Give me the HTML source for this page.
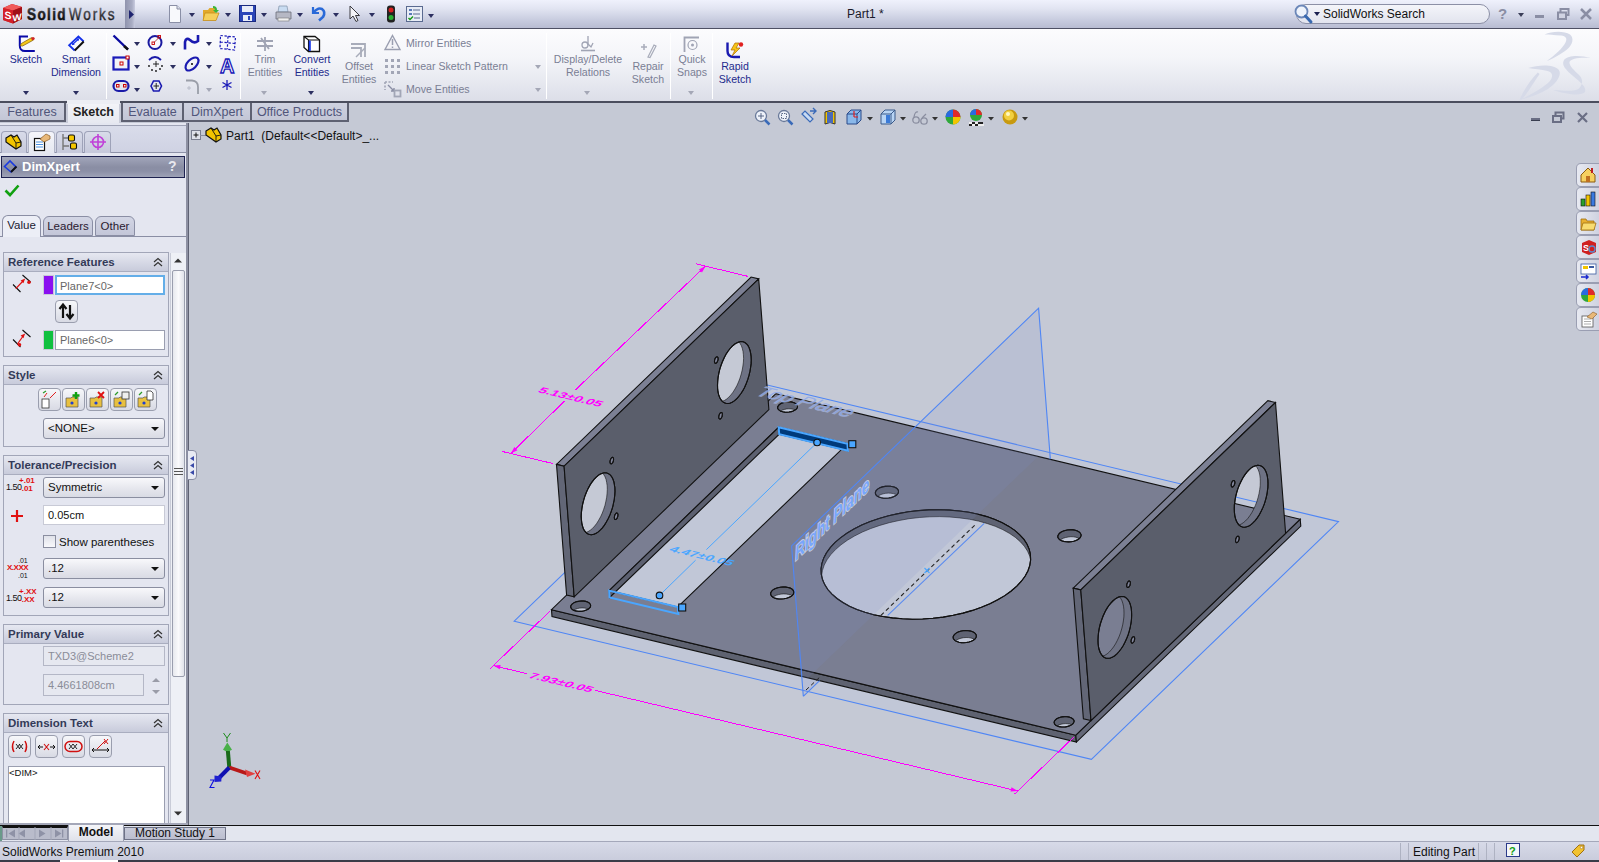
<!DOCTYPE html>
<html><head><meta charset="utf-8">
<style>
*{margin:0;padding:0;box-sizing:border-box}
html,body{width:1599px;height:862px;overflow:hidden;background:#c5c9d5;font-family:"Liberation Sans",sans-serif;font-size:11px;color:#000}
.a{position:absolute}
svg{overflow:visible}
#title{left:0;top:0;width:1599px;height:29px;background:linear-gradient(#eff1fc 0%,#e2e5f2 30%,#c9cde0 70%,#b8bcd2 100%);border-bottom:1px solid #4e5064}
#logo{left:0;top:0;width:125px;height:28px;background:linear-gradient(#e8ebf6 0%,#d4d7e6 50%,#bfc3d6 100%)}
#logoarr{left:125px;top:0;width:10px;height:28px;background:linear-gradient(90deg,#8f93ad,#a9adc4 70%,#c9cce0)}
#ribbon{left:0;top:29px;width:1599px;height:74px;background:linear-gradient(#fcfcfe 0%,#f4f5f9 40%,#e4e6ee 80%,#dcdee8 100%);border-bottom:2px solid #4b4e5e}
.rt{position:absolute;color:#1d2a8c;text-align:center;line-height:13px;font-size:10.6px;white-space:nowrap}
.gr{color:#7a7e94}
.sep{position:absolute;top:33px;width:1px;height:66px;background:#d0d2dc;border-right:1px solid #fff}
.dd{position:absolute;width:0;height:0;border-left:3.5px solid transparent;border-right:3.5px solid transparent;border-top:4px solid #2c2f60}
.ddg{border-top-color:#a4a7b6}
.tab{position:absolute;top:103px;height:19px;background:linear-gradient(#cfd2e0,#c3c6d6);border:2px solid #5e6172;border-top:none;color:#50557a;font-size:12.5px;line-height:18px;text-align:center}
.tabact{background:linear-gradient(#f3f4f8,#e6e8f0);border-color:#c8cbd8;border-bottom:none;height:21px;font-weight:bold;color:#222}
</style></head><body>
<!-- viewport bg -->
<div class="a" style="left:0;top:102px;width:1599px;height:724px;background:#c5c9d5"></div>
<svg class="a" style="left:0;top:0" width="1599" height="862" viewBox="0 0 1599 862"><polygon points="514.2,621.2 1091.4,759.4 1338.5,521.6 761.2,383.5" fill="#b4c0e4" fill-opacity="0.18" stroke="#4f86f5" stroke-width="1.1"/>
<polygon points="551.5,609.7 1075.8,735.2 1076.4,742.1 552.0,616.6" fill="#5e6270" stroke="#111" stroke-width="1.1"/>
<polygon points="1075.8,735.2 1300.2,519.2 1300.8,526.1 1076.4,742.1" fill="#646878" stroke="#111" stroke-width="1.1"/>
<path d="M551.5,609.7 L1075.8,735.2 L1300.2,519.2 L775.9,393.7ZM589.3,608.2 L590.2,607.1 L590.6,606.0 L590.5,604.8 L589.9,603.8 L588.9,602.8 L587.4,602.0 L585.6,601.4 L583.6,601.1 L581.4,601.0 L579.2,601.2 L577.1,601.6 L575.1,602.3 L573.4,603.1 L572.1,604.1 L571.2,605.2 L570.8,606.4 L570.9,607.5 L571.5,608.6 L572.5,609.6 L574.0,610.4 L575.8,610.9 L577.8,611.3 L580.0,611.4 L582.2,611.2 L584.3,610.8 L586.3,610.1 L588.0,609.2ZM1072.7,723.9 L1073.5,722.8 L1074.0,721.7 L1073.9,720.5 L1073.3,719.4 L1072.2,718.5 L1070.8,717.7 L1069.0,717.1 L1067.0,716.8 L1064.8,716.7 L1062.6,716.9 L1060.4,717.3 L1058.5,717.9 L1056.8,718.8 L1055.5,719.8 L1054.6,720.9 L1054.2,722.1 L1054.3,723.2 L1054.9,724.3 L1055.9,725.2 L1057.3,726.0 L1059.1,726.6 L1061.2,726.9 L1063.4,727.0 L1065.6,726.9 L1067.7,726.4 L1069.7,725.8 L1071.4,724.9ZM796.2,409.1 L797.1,408.0 L797.5,406.8 L797.4,405.7 L796.8,404.6 L795.8,403.6 L794.4,402.9 L792.6,402.3 L790.5,401.9 L788.3,401.9 L786.1,402.0 L784.0,402.5 L782.0,403.1 L780.3,404.0 L779.0,405.0 L778.2,406.1 L777.7,407.2 L777.8,408.4 L778.4,409.5 L779.5,410.4 L780.9,411.2 L782.7,411.8 L784.7,412.1 L786.9,412.2 L789.1,412.0 L791.3,411.6 L793.2,410.9 L794.9,410.1ZM1279.6,524.8 L1280.5,523.7 L1280.9,522.5 L1280.8,521.4 L1280.2,520.3 L1279.2,519.3 L1277.7,518.5 L1275.9,518.0 L1273.9,517.6 L1271.7,517.5 L1269.5,517.7 L1267.3,518.1 L1265.4,518.8 L1263.7,519.6 L1262.4,520.6 L1261.5,521.8 L1261.1,522.9 L1261.2,524.1 L1261.8,525.1 L1262.8,526.1 L1264.3,526.9 L1266.1,527.5 L1268.1,527.8 L1270.3,527.9 L1272.5,527.7 L1274.6,527.3 L1276.6,526.6 L1278.3,525.8ZM792.3,595.4 L793.3,594.1 L793.8,592.8 L793.7,591.4 L793.0,590.2 L791.8,589.0 L790.1,588.1 L788.0,587.5 L785.6,587.1 L783.1,587.0 L780.5,587.2 L778.0,587.7 L775.7,588.4 L773.7,589.4 L772.2,590.6 L771.2,591.9 L770.7,593.2 L770.8,594.6 L771.5,595.8 L772.7,597.0 L774.4,597.9 L776.5,598.6 L778.8,599.0 L781.4,599.0 L784.0,598.8 L786.5,598.3 L788.8,597.6 L790.8,596.6ZM974.8,639.1 L975.8,637.8 L976.3,636.4 L976.2,635.1 L975.5,633.8 L974.3,632.7 L972.6,631.8 L970.5,631.1 L968.1,630.7 L965.6,630.6 L963.0,630.8 L960.5,631.3 L958.2,632.1 L956.2,633.1 L954.7,634.3 L953.7,635.6 L953.2,636.9 L953.3,638.3 L954.0,639.5 L955.2,640.6 L956.9,641.6 L959.0,642.2 L961.3,642.6 L963.9,642.7 L966.5,642.5 L969.0,642.0 L971.3,641.3 L973.3,640.3ZM897.0,494.6 L898.0,493.3 L898.5,492.0 L898.4,490.6 L897.7,489.4 L896.5,488.3 L894.8,487.3 L892.7,486.7 L890.3,486.3 L887.8,486.2 L885.2,486.4 L882.7,486.9 L880.4,487.6 L878.4,488.6 L876.9,489.8 L875.9,491.1 L875.4,492.5 L875.5,493.8 L876.2,495.1 L877.4,496.2 L879.1,497.1 L881.2,497.8 L883.6,498.2 L886.1,498.3 L888.7,498.0 L891.2,497.6 L893.5,496.8 L895.5,495.8ZM1079.5,538.3 L1080.5,537.0 L1081.0,535.6 L1080.9,534.3 L1080.2,533.0 L1079.0,531.9 L1077.3,531.0 L1075.2,530.3 L1072.9,529.9 L1070.3,529.8 L1067.7,530.0 L1065.2,530.5 L1062.9,531.3 L1060.9,532.3 L1059.4,533.5 L1058.4,534.8 L1057.9,536.1 L1058.0,537.5 L1058.7,538.7 L1059.9,539.8 L1061.6,540.8 L1063.7,541.4 L1066.1,541.8 L1068.6,541.9 L1071.2,541.7 L1073.7,541.2 L1076.0,540.5 L1078.0,539.5ZM1016.8,586.2 L1021.4,581.2 L1025.2,576.0 L1028.0,570.7 L1029.8,565.3 L1030.6,560.0 L1030.4,554.6 L1029.2,549.4 L1027.0,544.3 L1023.9,539.4 L1019.7,534.8 L1014.7,530.4 L1008.8,526.4 L1002.2,522.7 L994.8,519.4 L986.7,516.6 L978.0,514.2 L968.9,512.3 L959.3,511.0 L949.4,510.1 L939.3,509.7 L929.0,509.9 L918.7,510.6 L908.5,511.8 L898.5,513.6 L888.7,515.8 L879.2,518.5 L870.3,521.6 L861.8,525.1 L854.0,529.0 L846.9,533.3 L840.5,537.9 L834.9,542.7 L830.3,547.7 L826.5,552.9 L823.7,558.2 L821.9,563.6 L821.1,568.9 L821.3,574.3 L822.5,579.5 L824.7,584.6 L827.8,589.5 L832.0,594.1 L837.0,598.5 L842.9,602.5 L849.5,606.2 L856.9,609.4 L865.0,612.3 L873.7,614.7 L882.8,616.5 L892.4,617.9 L902.3,618.8 L912.4,619.2 L922.7,619.0 L933.0,618.3 L943.2,617.1 L953.2,615.3 L963.0,613.1 L972.5,610.4 L981.4,607.3 L989.9,603.8 L997.7,599.8 L1004.8,595.6 L1011.2,591.0ZM609.1,590.6 L778.7,427.3 L847.4,443.8 L677.8,607.0Z" fill="#7a7e92" fill-rule="evenodd" stroke="#111" stroke-width="1.1"/>
<path d="M590.2,607.1 L590.6,606.0 L590.5,604.8 L589.9,603.8 L588.9,602.8 L587.4,602.0 L585.6,601.4 L583.6,601.1 L581.4,601.0 L579.2,601.2 L577.1,601.6 L575.1,602.3 L573.4,603.1 L572.1,604.1 L571.2,605.2 L570.8,606.4 L570.9,607.5 L571.5,608.6 L572.5,609.6 L573.7,610.2 L574.0,610.0 L575.6,609.2 L577.6,608.5 L579.7,608.1 L582.0,607.9 L584.1,608.0 L586.2,608.3 L588.0,608.9 L588.2,609.1 L589.3,608.2Z" fill="#5f6373" stroke="#111" stroke-width="0.6"/>
<path d="M589.3,608.2 L590.2,607.1 L590.6,606.0 L590.5,604.8 L589.9,603.8 L588.9,602.8 L587.4,602.0 L585.6,601.4 L583.6,601.1 L581.4,601.0 L579.2,601.2 L577.1,601.6 L575.1,602.3 L573.4,603.1 L572.1,604.1 L571.2,605.2 L570.8,606.4 L570.9,607.5 L571.5,608.6 L572.5,609.6 L574.0,610.4 L575.8,610.9 L577.8,611.3 L580.0,611.4 L582.2,611.2 L584.3,610.8 L586.3,610.1 L588.0,609.2Z" fill="none" stroke="#111" stroke-width="1.1"/>
<path d="M1073.5,722.8 L1074.0,721.7 L1073.9,720.5 L1073.3,719.4 L1072.2,718.5 L1070.8,717.7 L1069.0,717.1 L1067.0,716.8 L1064.8,716.7 L1062.6,716.9 L1060.4,717.3 L1058.5,717.9 L1056.8,718.8 L1055.5,719.8 L1054.6,720.9 L1054.2,722.1 L1054.3,723.2 L1054.9,724.3 L1055.9,725.2 L1057.1,725.9 L1057.3,725.7 L1059.0,724.9 L1061.0,724.2 L1063.1,723.8 L1065.3,723.6 L1067.5,723.7 L1069.5,724.0 L1071.3,724.6 L1071.6,724.7 L1072.7,723.9Z" fill="#5f6373" stroke="#111" stroke-width="0.6"/>
<path d="M1072.7,723.9 L1073.5,722.8 L1074.0,721.7 L1073.9,720.5 L1073.3,719.4 L1072.2,718.5 L1070.8,717.7 L1069.0,717.1 L1067.0,716.8 L1064.8,716.7 L1062.6,716.9 L1060.4,717.3 L1058.5,717.9 L1056.8,718.8 L1055.5,719.8 L1054.6,720.9 L1054.2,722.1 L1054.3,723.2 L1054.9,724.3 L1055.9,725.2 L1057.3,726.0 L1059.1,726.6 L1061.2,726.9 L1063.4,727.0 L1065.6,726.9 L1067.7,726.4 L1069.7,725.8 L1071.4,724.9Z" fill="none" stroke="#111" stroke-width="1.1"/>
<path d="M797.1,408.0 L797.5,406.8 L797.4,405.7 L796.8,404.6 L795.8,403.6 L794.4,402.9 L792.6,402.3 L790.5,401.9 L788.3,401.9 L786.1,402.0 L784.0,402.5 L782.0,403.1 L780.3,404.0 L779.0,405.0 L778.2,406.1 L777.7,407.2 L777.8,408.4 L778.4,409.5 L779.5,410.4 L780.6,411.1 L780.9,410.9 L782.6,410.0 L784.5,409.4 L786.7,408.9 L788.9,408.8 L791.1,408.9 L793.1,409.2 L794.9,409.8 L795.2,409.9 L796.2,409.1Z" fill="#5f6373" stroke="#111" stroke-width="0.6"/>
<path d="M796.2,409.1 L797.1,408.0 L797.5,406.8 L797.4,405.7 L796.8,404.6 L795.8,403.6 L794.4,402.9 L792.6,402.3 L790.5,401.9 L788.3,401.9 L786.1,402.0 L784.0,402.5 L782.0,403.1 L780.3,404.0 L779.0,405.0 L778.2,406.1 L777.7,407.2 L777.8,408.4 L778.4,409.5 L779.5,410.4 L780.9,411.2 L782.7,411.8 L784.7,412.1 L786.9,412.2 L789.1,412.0 L791.3,411.6 L793.2,410.9 L794.9,410.1Z" fill="none" stroke="#111" stroke-width="1.1"/>
<path d="M1280.5,523.7 L1280.9,522.5 L1280.8,521.4 L1280.2,520.3 L1279.2,519.3 L1277.7,518.5 L1275.9,518.0 L1273.9,517.6 L1271.7,517.5 L1269.5,517.7 L1267.3,518.1 L1265.4,518.8 L1263.7,519.6 L1262.4,520.6 L1261.5,521.8 L1261.1,522.9 L1261.2,524.1 L1261.8,525.1 L1262.8,526.1 L1264.0,526.7 L1264.2,526.6 L1265.9,525.7 L1267.9,525.0 L1270.0,524.6 L1272.2,524.4 L1274.4,524.5 L1276.5,524.9 L1278.3,525.4 L1278.5,525.6 L1279.6,524.8Z" fill="#5f6373" stroke="#111" stroke-width="0.6"/>
<path d="M1279.6,524.8 L1280.5,523.7 L1280.9,522.5 L1280.8,521.4 L1280.2,520.3 L1279.2,519.3 L1277.7,518.5 L1275.9,518.0 L1273.9,517.6 L1271.7,517.5 L1269.5,517.7 L1267.3,518.1 L1265.4,518.8 L1263.7,519.6 L1262.4,520.6 L1261.5,521.8 L1261.1,522.9 L1261.2,524.1 L1261.8,525.1 L1262.8,526.1 L1264.3,526.9 L1266.1,527.5 L1268.1,527.8 L1270.3,527.9 L1272.5,527.7 L1274.6,527.3 L1276.6,526.6 L1278.3,525.8Z" fill="none" stroke="#111" stroke-width="1.1"/>
<path d="M793.3,594.1 L793.8,592.8 L793.7,591.4 L793.0,590.2 L791.8,589.0 L790.1,588.1 L788.0,587.5 L785.6,587.1 L783.1,587.0 L780.5,587.2 L778.0,587.7 L775.7,588.4 L773.7,589.4 L772.2,590.6 L771.2,591.9 L770.7,593.2 L770.8,594.6 L771.5,595.8 L772.7,597.0 L773.1,597.2 L774.3,596.3 L776.2,595.3 L778.5,594.6 L781.0,594.1 L783.6,593.9 L786.2,594.0 L788.5,594.4 L790.6,595.0 L791.9,595.7 L792.3,595.4Z" fill="#5f6373" stroke="#111" stroke-width="0.6"/>
<path d="M792.3,595.4 L793.3,594.1 L793.8,592.8 L793.7,591.4 L793.0,590.2 L791.8,589.0 L790.1,588.1 L788.0,587.5 L785.6,587.1 L783.1,587.0 L780.5,587.2 L778.0,587.7 L775.7,588.4 L773.7,589.4 L772.2,590.6 L771.2,591.9 L770.7,593.2 L770.8,594.6 L771.5,595.8 L772.7,597.0 L774.4,597.9 L776.5,598.6 L778.8,599.0 L781.4,599.0 L784.0,598.8 L786.5,598.3 L788.8,597.6 L790.8,596.6Z" fill="none" stroke="#111" stroke-width="1.1"/>
<path d="M975.8,637.8 L976.3,636.4 L976.2,635.1 L975.5,633.8 L974.3,632.7 L972.6,631.8 L970.5,631.1 L968.1,630.7 L965.6,630.6 L963.0,630.8 L960.5,631.3 L958.2,632.1 L956.2,633.1 L954.7,634.3 L953.7,635.6 L953.2,636.9 L953.3,638.3 L954.0,639.5 L955.2,640.6 L955.6,640.9 L956.8,640.0 L958.7,639.0 L961.0,638.2 L963.5,637.7 L966.1,637.5 L968.7,637.6 L971.0,638.0 L973.1,638.7 L974.4,639.4 L974.8,639.1Z" fill="#5f6373" stroke="#111" stroke-width="0.6"/>
<path d="M974.8,639.1 L975.8,637.8 L976.3,636.4 L976.2,635.1 L975.5,633.8 L974.3,632.7 L972.6,631.8 L970.5,631.1 L968.1,630.7 L965.6,630.6 L963.0,630.8 L960.5,631.3 L958.2,632.1 L956.2,633.1 L954.7,634.3 L953.7,635.6 L953.2,636.9 L953.3,638.3 L954.0,639.5 L955.2,640.6 L956.9,641.6 L959.0,642.2 L961.3,642.6 L963.9,642.7 L966.5,642.5 L969.0,642.0 L971.3,641.3 L973.3,640.3Z" fill="none" stroke="#111" stroke-width="1.1"/>
<path d="M898.0,493.3 L898.5,492.0 L898.4,490.6 L897.7,489.4 L896.5,488.3 L894.8,487.3 L892.7,486.7 L890.3,486.3 L887.8,486.2 L885.2,486.4 L882.7,486.9 L880.4,487.6 L878.4,488.6 L876.9,489.8 L875.9,491.1 L875.4,492.5 L875.5,493.8 L876.2,495.1 L877.4,496.2 L877.8,496.4 L879.0,495.5 L880.9,494.5 L883.2,493.8 L885.7,493.3 L888.3,493.1 L890.9,493.2 L893.3,493.6 L895.4,494.2 L896.6,494.9 L897.0,494.6Z" fill="#5f6373" stroke="#111" stroke-width="0.6"/>
<path d="M897.0,494.6 L898.0,493.3 L898.5,492.0 L898.4,490.6 L897.7,489.4 L896.5,488.3 L894.8,487.3 L892.7,486.7 L890.3,486.3 L887.8,486.2 L885.2,486.4 L882.7,486.9 L880.4,487.6 L878.4,488.6 L876.9,489.8 L875.9,491.1 L875.4,492.5 L875.5,493.8 L876.2,495.1 L877.4,496.2 L879.1,497.1 L881.2,497.8 L883.6,498.2 L886.1,498.3 L888.7,498.0 L891.2,497.6 L893.5,496.8 L895.5,495.8Z" fill="none" stroke="#111" stroke-width="1.1"/>
<path d="M1080.5,537.0 L1081.0,535.6 L1080.9,534.3 L1080.2,533.0 L1079.0,531.9 L1077.3,531.0 L1075.2,530.3 L1072.9,529.9 L1070.3,529.8 L1067.7,530.0 L1065.2,530.5 L1062.9,531.3 L1060.9,532.3 L1059.4,533.5 L1058.4,534.8 L1057.9,536.1 L1058.0,537.5 L1058.7,538.7 L1059.9,539.8 L1060.4,540.1 L1061.5,539.2 L1063.4,538.2 L1065.7,537.5 L1068.2,537.0 L1070.8,536.7 L1073.4,536.8 L1075.8,537.2 L1077.9,537.9 L1079.1,538.6 L1079.5,538.3Z" fill="#5f6373" stroke="#111" stroke-width="0.6"/>
<path d="M1079.5,538.3 L1080.5,537.0 L1081.0,535.6 L1080.9,534.3 L1080.2,533.0 L1079.0,531.9 L1077.3,531.0 L1075.2,530.3 L1072.9,529.9 L1070.3,529.8 L1067.7,530.0 L1065.2,530.5 L1062.9,531.3 L1060.9,532.3 L1059.4,533.5 L1058.4,534.8 L1057.9,536.1 L1058.0,537.5 L1058.7,538.7 L1059.9,539.8 L1061.6,540.8 L1063.7,541.4 L1066.1,541.8 L1068.6,541.9 L1071.2,541.7 L1073.7,541.2 L1076.0,540.5 L1078.0,539.5Z" fill="none" stroke="#111" stroke-width="1.1"/>
<path d="M1030.6,560.0 L1030.4,554.6 L1029.2,549.4 L1027.0,544.3 L1023.9,539.4 L1019.7,534.8 L1014.7,530.4 L1008.8,526.4 L1002.2,522.7 L994.8,519.4 L986.7,516.6 L978.0,514.2 L968.9,512.3 L959.3,511.0 L949.4,510.1 L939.3,509.7 L929.0,509.9 L918.7,510.6 L908.5,511.8 L898.5,513.6 L888.7,515.8 L879.2,518.5 L870.3,521.6 L861.8,525.1 L854.0,529.0 L846.9,533.3 L840.5,537.9 L834.9,542.7 L830.3,547.7 L826.5,552.9 L823.7,558.2 L821.9,563.6 L821.1,568.9 L821.3,574.3 L821.6,575.8 L822.4,570.5 L824.2,565.1 L827.0,559.8 L830.8,554.6 L835.5,549.6 L841.0,544.8 L847.4,540.2 L854.5,536.0 L862.4,532.0 L870.8,528.5 L879.8,525.4 L889.2,522.7 L899.0,520.5 L909.0,518.7 L919.3,517.5 L929.5,516.8 L939.8,516.6 L949.9,517.0 L959.8,517.9 L969.4,519.2 L978.6,521.1 L987.2,523.5 L995.3,526.3 L1002.7,529.6 L1009.4,533.3 L1015.3,537.3 L1020.3,541.7 L1024.4,546.3 L1027.6,551.2 L1029.8,556.3 L1030.6,560.0Z" fill="#5f6373" stroke="#111" stroke-width="0.6"/>
<path d="M1016.8,586.2 L1021.4,581.2 L1025.2,576.0 L1028.0,570.7 L1029.8,565.3 L1030.6,560.0 L1030.4,554.6 L1029.2,549.4 L1027.0,544.3 L1023.9,539.4 L1019.7,534.8 L1014.7,530.4 L1008.8,526.4 L1002.2,522.7 L994.8,519.4 L986.7,516.6 L978.0,514.2 L968.9,512.3 L959.3,511.0 L949.4,510.1 L939.3,509.7 L929.0,509.9 L918.7,510.6 L908.5,511.8 L898.5,513.6 L888.7,515.8 L879.2,518.5 L870.3,521.6 L861.8,525.1 L854.0,529.0 L846.9,533.3 L840.5,537.9 L834.9,542.7 L830.3,547.7 L826.5,552.9 L823.7,558.2 L821.9,563.6 L821.1,568.9 L821.3,574.3 L822.5,579.5 L824.7,584.6 L827.8,589.5 L832.0,594.1 L837.0,598.5 L842.9,602.5 L849.5,606.2 L856.9,609.4 L865.0,612.3 L873.7,614.7 L882.8,616.5 L892.4,617.9 L902.3,618.8 L912.4,619.2 L922.7,619.0 L933.0,618.3 L943.2,617.1 L953.2,615.3 L963.0,613.1 L972.5,610.4 L981.4,607.3 L989.9,603.8 L997.7,599.8 L1004.8,595.6 L1011.2,591.0Z" fill="none" stroke="#111" stroke-width="1.1"/>
<polygon points="609.1,590.6 778.7,427.3 779.2,434.2 609.6,597.5" fill="#5c6070" stroke="#111" stroke-width="1.1"/>
<polygon points="778.7,427.3 847.4,443.8 847.9,450.7 779.2,434.2" fill="#5c6070" stroke="#111" stroke-width="1.1"/>
<polygon points="556.5,464.4 564.1,466.2 758.7,278.9 751.1,277.0" fill="#7c8094" stroke="#111" stroke-width="1.1"/>
<polygon points="556.5,464.4 564.1,466.2 574.2,596.9 566.6,595.1" fill="#626676" stroke="#111" stroke-width="1.1"/>
<path d="M574.2,596.9 L564.1,466.2 L758.7,278.9 L768.9,409.6ZM596.0,477.3 L598.2,475.4 L600.4,474.0 L602.6,473.2 L604.6,472.8 L606.6,473.0 L608.4,473.7 L610.1,474.9 L611.5,476.6 L612.7,478.8 L613.7,481.4 L614.3,484.4 L614.8,487.7 L614.9,491.3 L614.7,495.1 L614.3,499.0 L613.5,503.0 L612.6,507.1 L611.3,511.1 L609.9,514.9 L608.2,518.6 L606.3,522.0 L604.4,525.1 L602.3,527.9 L600.1,530.2 L597.9,532.1 L595.7,533.4 L593.6,534.3 L591.5,534.7 L589.5,534.5 L587.7,533.8 L586.1,532.6 L584.6,530.9 L583.4,528.7 L582.5,526.1 L581.8,523.1 L581.4,519.8 L581.2,516.2 L581.4,512.4 L581.9,508.5 L582.6,504.4 L583.6,500.4 L584.8,496.4 L586.3,492.5 L587.9,488.9 L589.8,485.4 L591.8,482.3 L593.8,479.6ZM732.3,346.1 L734.5,344.3 L736.7,342.9 L738.8,342.0 L740.9,341.6 L742.9,341.8 L744.7,342.5 L746.3,343.7 L747.8,345.4 L749.0,347.6 L749.9,350.2 L750.6,353.2 L751.0,356.5 L751.2,360.1 L751.0,363.9 L750.5,367.9 L749.8,371.9 L748.8,375.9 L747.6,379.9 L746.1,383.8 L744.5,387.5 L742.6,390.9 L740.6,394.0 L738.5,396.7 L736.4,399.0 L734.2,400.9 L732.0,402.3 L729.8,403.2 L727.8,403.5 L725.8,403.3 L724.0,402.6 L722.3,401.4 L720.9,399.7 L719.7,397.5 L718.7,394.9 L718.0,392.0 L717.6,388.6 L717.5,385.1 L717.7,381.3 L718.1,377.3 L718.8,373.3 L719.8,369.2 L721.1,365.2 L722.5,361.4 L724.2,357.7 L726.0,354.3 L728.0,351.2 L730.1,348.5ZM611.6,457.8 L612.1,457.5 L612.7,457.4 L613.1,457.6 L613.4,458.1 L613.5,458.9 L613.5,459.9 L613.3,460.9 L613.0,461.9 L612.5,462.7 L612.0,463.4 L611.5,463.8 L610.9,463.8 L610.5,463.6 L610.2,463.1 L610.1,462.3 L610.1,461.3 L610.3,460.3 L610.6,459.4 L611.1,458.5ZM615.9,513.5 L616.5,513.1 L617.0,513.0 L617.4,513.3 L617.7,513.8 L617.9,514.6 L617.8,515.5 L617.7,516.5 L617.3,517.5 L616.9,518.4 L616.3,519.0 L615.8,519.4 L615.3,519.5 L614.8,519.3 L614.5,518.7 L614.4,517.9 L614.4,517.0 L614.6,516.0 L614.9,515.0 L615.4,514.2ZM716.1,357.3 L716.6,356.9 L717.1,356.8 L717.6,357.1 L717.9,357.6 L718.0,358.4 L718.0,359.3 L717.8,360.3 L717.5,361.3 L717.0,362.2 L716.5,362.8 L715.9,363.2 L715.4,363.3 L715.0,363.0 L714.7,362.5 L714.5,361.7 L714.5,360.8 L714.7,359.8 L715.1,358.8 L715.5,357.9ZM720.4,413.0 L720.9,412.6 L721.4,412.5 L721.9,412.7 L722.2,413.3 L722.3,414.0 L722.3,415.0 L722.1,416.0 L721.8,417.0 L721.3,417.8 L720.8,418.5 L720.3,418.9 L719.7,418.9 L719.3,418.7 L719.0,418.2 L718.8,417.4 L718.9,416.5 L719.1,415.4 L719.4,414.5 L719.9,413.6Z" fill="#5a5e6b" fill-rule="evenodd" stroke="#111" stroke-width="1.1"/>
<path d="M586.1,532.6 L587.7,533.8 L589.5,534.5 L591.5,534.7 L593.6,534.3 L595.7,533.4 L597.9,532.1 L600.1,530.2 L602.3,527.9 L604.4,525.1 L606.3,522.0 L608.2,518.6 L609.9,514.9 L611.3,511.1 L612.6,507.1 L613.5,503.0 L614.3,499.0 L614.7,495.1 L614.9,491.3 L614.8,487.7 L614.3,484.4 L613.7,481.4 L612.7,478.8 L611.5,476.6 L610.1,474.9 L608.4,473.7 L606.6,473.0 L604.6,472.8 L602.6,473.2 L602.5,473.2 L603.9,474.8 L605.1,476.9 L606.1,479.6 L606.7,482.5 L607.2,485.8 L607.3,489.4 L607.1,493.2 L606.7,497.2 L605.9,501.2 L605.0,505.3 L603.7,509.3 L602.3,513.1 L600.6,516.8 L598.7,520.2 L596.8,523.3 L594.7,526.0 L592.5,528.4 L590.3,530.2 L588.1,531.6 L586.0,532.5Z" fill="#6e7284" stroke="#111" stroke-width="0.6"/>
<path d="M596.0,477.3 L598.2,475.4 L600.4,474.0 L602.6,473.2 L604.6,472.8 L606.6,473.0 L608.4,473.7 L610.1,474.9 L611.5,476.6 L612.7,478.8 L613.7,481.4 L614.3,484.4 L614.8,487.7 L614.9,491.3 L614.7,495.1 L614.3,499.0 L613.5,503.0 L612.6,507.1 L611.3,511.1 L609.9,514.9 L608.2,518.6 L606.3,522.0 L604.4,525.1 L602.3,527.9 L600.1,530.2 L597.9,532.1 L595.7,533.4 L593.6,534.3 L591.5,534.7 L589.5,534.5 L587.7,533.8 L586.1,532.6 L584.6,530.9 L583.4,528.7 L582.5,526.1 L581.8,523.1 L581.4,519.8 L581.2,516.2 L581.4,512.4 L581.9,508.5 L582.6,504.4 L583.6,500.4 L584.8,496.4 L586.3,492.5 L587.9,488.9 L589.8,485.4 L591.8,482.3 L593.8,479.6Z" fill="none" stroke="#111" stroke-width="1.1"/>
<path d="M722.3,401.4 L724.0,402.6 L725.8,403.3 L727.8,403.5 L729.8,403.2 L732.0,402.3 L734.2,400.9 L736.4,399.0 L738.5,396.7 L740.6,394.0 L742.6,390.9 L744.5,387.5 L746.1,383.8 L747.6,379.9 L748.8,375.9 L749.8,371.9 L750.5,367.9 L751.0,363.9 L751.2,360.1 L751.0,356.5 L750.6,353.2 L749.9,350.2 L749.0,347.6 L747.8,345.4 L746.3,343.7 L744.7,342.5 L742.9,341.8 L740.9,341.6 L738.8,342.0 L738.8,342.0 L740.2,343.6 L741.4,345.8 L742.3,348.4 L743.0,351.4 L743.4,354.7 L743.6,358.3 L743.4,362.1 L742.9,366.0 L742.2,370.1 L741.2,374.1 L740.0,378.1 L738.5,382.0 L736.9,385.6 L735.0,389.0 L733.0,392.2 L730.9,394.9 L728.8,397.2 L726.6,399.1 L724.4,400.5 L722.3,401.3Z" fill="#6e7284" stroke="#111" stroke-width="0.6"/>
<path d="M732.3,346.1 L734.5,344.3 L736.7,342.9 L738.8,342.0 L740.9,341.6 L742.9,341.8 L744.7,342.5 L746.3,343.7 L747.8,345.4 L749.0,347.6 L749.9,350.2 L750.6,353.2 L751.0,356.5 L751.2,360.1 L751.0,363.9 L750.5,367.9 L749.8,371.9 L748.8,375.9 L747.6,379.9 L746.1,383.8 L744.5,387.5 L742.6,390.9 L740.6,394.0 L738.5,396.7 L736.4,399.0 L734.2,400.9 L732.0,402.3 L729.8,403.2 L727.8,403.5 L725.8,403.3 L724.0,402.6 L722.3,401.4 L720.9,399.7 L719.7,397.5 L718.7,394.9 L718.0,392.0 L717.6,388.6 L717.5,385.1 L717.7,381.3 L718.1,377.3 L718.8,373.3 L719.8,369.2 L721.1,365.2 L722.5,361.4 L724.2,357.7 L726.0,354.3 L728.0,351.2 L730.1,348.5Z" fill="none" stroke="#111" stroke-width="1.1"/>
<path d="M611.1,458.5 L610.6,459.4 L610.3,460.3 L610.1,461.3 L610.1,462.3 L610.2,463.1 L610.5,463.6 L610.9,463.8 L611.5,463.8 L612.0,463.4 L612.5,462.7 L613.0,461.9 L613.3,460.9 L613.5,459.9 L613.5,458.9 L613.4,458.1 L613.1,457.6 L612.7,457.4 L612.1,457.5 L611.6,457.8Z" fill="#80849a" stroke="#111" stroke-width="0.6"/>
<path d="M611.6,457.8 L612.1,457.5 L612.7,457.4 L613.1,457.6 L613.4,458.1 L613.5,458.9 L613.5,459.9 L613.3,460.9 L613.0,461.9 L612.5,462.7 L612.0,463.4 L611.5,463.8 L610.9,463.8 L610.5,463.6 L610.2,463.1 L610.1,462.3 L610.1,461.3 L610.3,460.3 L610.6,459.4 L611.1,458.5Z" fill="none" stroke="#111" stroke-width="1.1"/>
<path d="M615.4,514.2 L614.9,515.0 L614.6,516.0 L614.4,517.0 L614.4,517.9 L614.5,518.7 L614.8,519.3 L615.3,519.5 L615.8,519.4 L616.3,519.0 L616.9,518.4 L617.3,517.5 L617.7,516.5 L617.8,515.5 L617.9,514.6 L617.7,513.8 L617.4,513.3 L617.0,513.0 L616.5,513.1 L615.9,513.5Z" fill="#80849a" stroke="#111" stroke-width="0.6"/>
<path d="M615.9,513.5 L616.5,513.1 L617.0,513.0 L617.4,513.3 L617.7,513.8 L617.9,514.6 L617.8,515.5 L617.7,516.5 L617.3,517.5 L616.9,518.4 L616.3,519.0 L615.8,519.4 L615.3,519.5 L614.8,519.3 L614.5,518.7 L614.4,517.9 L614.4,517.0 L614.6,516.0 L614.9,515.0 L615.4,514.2Z" fill="none" stroke="#111" stroke-width="1.1"/>
<path d="M715.5,357.9 L715.1,358.8 L714.7,359.8 L714.5,360.8 L714.5,361.7 L714.7,362.5 L715.0,363.0 L715.4,363.3 L715.9,363.2 L716.5,362.8 L717.0,362.2 L717.5,361.3 L717.8,360.3 L718.0,359.3 L718.0,358.4 L717.9,357.6 L717.6,357.1 L717.1,356.8 L716.6,356.9 L716.1,357.3Z" fill="#80849a" stroke="#111" stroke-width="0.6"/>
<path d="M716.1,357.3 L716.6,356.9 L717.1,356.8 L717.6,357.1 L717.9,357.6 L718.0,358.4 L718.0,359.3 L717.8,360.3 L717.5,361.3 L717.0,362.2 L716.5,362.8 L715.9,363.2 L715.4,363.3 L715.0,363.0 L714.7,362.5 L714.5,361.7 L714.5,360.8 L714.7,359.8 L715.1,358.8 L715.5,357.9Z" fill="none" stroke="#111" stroke-width="1.1"/>
<path d="M719.9,413.6 L719.4,414.5 L719.1,415.4 L718.9,416.5 L718.8,417.4 L719.0,418.2 L719.3,418.7 L719.7,418.9 L720.3,418.9 L720.8,418.5 L721.3,417.8 L721.8,417.0 L722.1,416.0 L722.3,415.0 L722.3,414.0 L722.2,413.3 L721.9,412.7 L721.4,412.5 L720.9,412.6 L720.4,413.0Z" fill="#80849a" stroke="#111" stroke-width="0.6"/>
<path d="M720.4,413.0 L720.9,412.6 L721.4,412.5 L721.9,412.7 L722.2,413.3 L722.3,414.0 L722.3,415.0 L722.1,416.0 L721.8,417.0 L721.3,417.8 L720.8,418.5 L720.3,418.9 L719.7,418.9 L719.3,418.7 L719.0,418.2 L718.8,417.4 L718.9,416.5 L719.1,415.4 L719.4,414.5 L719.9,413.6Z" fill="none" stroke="#111" stroke-width="1.1"/>
<polygon points="802.3,683.4 791.6,545.9 1038.6,308.2 1049.3,445.6" fill="#8090c8" fill-opacity="0.15" stroke="none"/>
<path d="M802.3,683.4 L803.3,696.3 L819.6,680.6 L808.0,677.9ZM1050.3,458.6 L1049.3,445.6 L1038.0,456.5 L1049.6,459.2Z" fill="#8090c8" fill-opacity="0.15" stroke="none"/>
<path d="M802.3,683.4 L791.6,545.9 L1038.6,308.2 L1049.3,445.6M802.3,683.4 L803.3,696.3M803.3,696.3 L819.6,680.6M1049.6,459.2 L1050.3,458.6M1050.3,458.6 L1049.3,445.6" fill="none" stroke="#4f86f5" stroke-width="1.1"/>
<polygon points="1073.2,588.1 1080.8,589.9 1275.5,402.5 1267.9,400.7" fill="#7c8094" stroke="#111" stroke-width="1.1"/>
<polygon points="1073.2,588.1 1080.8,589.9 1091.0,720.6 1083.4,718.8" fill="#626676" stroke="#111" stroke-width="1.1"/>
<path d="M1091.0,720.6 L1080.8,589.9 L1275.5,402.5 L1285.6,533.3ZM1112.8,601.0 L1115.0,599.1 L1117.2,597.7 L1119.3,596.8 L1121.4,596.5 L1123.4,596.6 L1125.2,597.3 L1126.8,598.6 L1128.3,600.3 L1129.5,602.4 L1130.4,605.0 L1131.1,608.0 L1131.5,611.3 L1131.6,614.9 L1131.5,618.7 L1131.0,622.7 L1130.3,626.7 L1129.3,630.8 L1128.1,634.7 L1126.6,638.6 L1124.9,642.3 L1123.1,645.7 L1121.1,648.8 L1119.0,651.5 L1116.9,653.9 L1114.7,655.7 L1112.5,657.1 L1110.3,658.0 L1108.3,658.3 L1106.3,658.2 L1104.5,657.5 L1102.8,656.3 L1101.4,654.5 L1100.2,652.4 L1099.2,649.8 L1098.5,646.8 L1098.1,643.5 L1098.0,639.9 L1098.2,636.1 L1098.6,632.1 L1099.3,628.1 L1100.3,624.0 L1101.6,620.1 L1103.0,616.2 L1104.7,612.5 L1106.5,609.1 L1108.5,606.0 L1110.6,603.3ZM1249.0,469.8 L1251.2,467.9 L1253.4,466.5 L1255.6,465.7 L1257.7,465.3 L1259.6,465.5 L1261.4,466.2 L1263.1,467.4 L1264.5,469.1 L1265.7,471.3 L1266.7,473.9 L1267.4,476.9 L1267.8,480.2 L1267.9,483.8 L1267.8,487.6 L1267.3,491.5 L1266.6,495.6 L1265.6,499.6 L1264.4,503.6 L1262.9,507.4 L1261.2,511.1 L1259.4,514.5 L1257.4,517.6 L1255.3,520.4 L1253.1,522.7 L1251.0,524.6 L1248.8,526.0 L1246.6,526.8 L1244.5,527.2 L1242.6,527.0 L1240.7,526.3 L1239.1,525.1 L1237.7,523.4 L1236.5,521.2 L1235.5,518.6 L1234.8,515.6 L1234.4,512.3 L1234.3,508.7 L1234.4,504.9 L1234.9,501.0 L1235.6,496.9 L1236.6,492.9 L1237.8,488.9 L1239.3,485.0 L1241.0,481.4 L1242.8,478.0 L1244.8,474.9 L1246.9,472.1ZM1128.3,581.5 L1128.9,581.1 L1129.4,581.0 L1129.8,581.3 L1130.2,581.8 L1130.3,582.6 L1130.3,583.5 L1130.1,584.5 L1129.8,585.5 L1129.3,586.4 L1128.8,587.0 L1128.2,587.4 L1127.7,587.5 L1127.3,587.3 L1127.0,586.7 L1126.8,585.9 L1126.8,585.0 L1127.0,584.0 L1127.4,583.0 L1127.8,582.2ZM1132.7,637.2 L1133.2,636.8 L1133.7,636.7 L1134.2,636.9 L1134.5,637.5 L1134.6,638.3 L1134.6,639.2 L1134.4,640.2 L1134.1,641.2 L1133.6,642.0 L1133.1,642.7 L1132.5,643.1 L1132.0,643.2 L1131.6,642.9 L1131.3,642.4 L1131.1,641.6 L1131.2,640.7 L1131.3,639.7 L1131.7,638.7 L1132.1,637.8ZM1232.8,481.0 L1233.4,480.6 L1233.9,480.5 L1234.3,480.7 L1234.6,481.3 L1234.8,482.0 L1234.8,483.0 L1234.6,484.0 L1234.2,485.0 L1233.8,485.8 L1233.2,486.5 L1232.7,486.9 L1232.2,486.9 L1231.7,486.7 L1231.4,486.2 L1231.3,485.4 L1231.3,484.5 L1231.5,483.4 L1231.8,482.5 L1232.3,481.6ZM1237.1,536.6 L1237.7,536.2 L1238.2,536.2 L1238.6,536.4 L1238.9,536.9 L1239.1,537.7 L1239.1,538.6 L1238.9,539.6 L1238.6,540.6 L1238.1,541.5 L1237.6,542.1 L1237.0,542.5 L1236.5,542.6 L1236.1,542.4 L1235.8,541.8 L1235.6,541.1 L1235.6,540.1 L1235.8,539.1 L1236.2,538.1 L1236.6,537.3Z" fill="#5a5e6b" fill-rule="evenodd" stroke="#111" stroke-width="1.1"/>
<path d="M1102.8,656.3 L1104.5,657.5 L1106.3,658.2 L1108.3,658.3 L1110.3,658.0 L1112.5,657.1 L1114.7,655.7 L1116.9,653.9 L1119.0,651.5 L1121.1,648.8 L1123.1,645.7 L1124.9,642.3 L1126.6,638.6 L1128.1,634.7 L1129.3,630.8 L1130.3,626.7 L1131.0,622.7 L1131.5,618.7 L1131.6,614.9 L1131.5,611.3 L1131.1,608.0 L1130.4,605.0 L1129.5,602.4 L1128.3,600.3 L1126.8,598.6 L1125.2,597.3 L1123.4,596.6 L1121.4,596.5 L1119.3,596.8 L1119.3,596.8 L1120.7,598.4 L1121.9,600.6 L1122.8,603.2 L1123.5,606.2 L1123.9,609.5 L1124.0,613.1 L1123.9,616.9 L1123.4,620.9 L1122.7,624.9 L1121.7,628.9 L1120.5,632.9 L1119.0,636.8 L1117.3,640.5 L1115.5,643.9 L1113.5,647.0 L1111.4,649.7 L1109.3,652.0 L1107.1,653.9 L1104.9,655.3 L1102.7,656.2Z" fill="#6e7284" stroke="#111" stroke-width="0.6"/>
<path d="M1112.8,601.0 L1115.0,599.1 L1117.2,597.7 L1119.3,596.8 L1121.4,596.5 L1123.4,596.6 L1125.2,597.3 L1126.8,598.6 L1128.3,600.3 L1129.5,602.4 L1130.4,605.0 L1131.1,608.0 L1131.5,611.3 L1131.6,614.9 L1131.5,618.7 L1131.0,622.7 L1130.3,626.7 L1129.3,630.8 L1128.1,634.7 L1126.6,638.6 L1124.9,642.3 L1123.1,645.7 L1121.1,648.8 L1119.0,651.5 L1116.9,653.9 L1114.7,655.7 L1112.5,657.1 L1110.3,658.0 L1108.3,658.3 L1106.3,658.2 L1104.5,657.5 L1102.8,656.3 L1101.4,654.5 L1100.2,652.4 L1099.2,649.8 L1098.5,646.8 L1098.1,643.5 L1098.0,639.9 L1098.2,636.1 L1098.6,632.1 L1099.3,628.1 L1100.3,624.0 L1101.6,620.1 L1103.0,616.2 L1104.7,612.5 L1106.5,609.1 L1108.5,606.0 L1110.6,603.3Z" fill="none" stroke="#111" stroke-width="1.1"/>
<path d="M1239.1,525.1 L1240.7,526.3 L1242.6,527.0 L1244.5,527.2 L1246.6,526.8 L1248.8,526.0 L1251.0,524.6 L1253.1,522.7 L1255.3,520.4 L1257.4,517.6 L1259.4,514.5 L1261.2,511.1 L1262.9,507.4 L1264.4,503.6 L1265.6,499.6 L1266.6,495.6 L1267.3,491.5 L1267.8,487.6 L1267.9,483.8 L1267.8,480.2 L1267.4,476.9 L1266.7,473.9 L1265.7,471.3 L1264.5,469.1 L1263.1,467.4 L1261.4,466.2 L1259.6,465.5 L1257.7,465.3 L1255.6,465.7 L1255.6,465.7 L1256.9,467.3 L1258.1,469.5 L1259.1,472.1 L1259.8,475.0 L1260.2,478.4 L1260.3,481.9 L1260.2,485.8 L1259.7,489.7 L1259.0,493.7 L1258.0,497.8 L1256.8,501.8 L1255.3,505.6 L1253.6,509.3 L1251.8,512.7 L1249.8,515.8 L1247.7,518.6 L1245.5,520.9 L1243.3,522.7 L1241.2,524.1 L1239.0,525.0Z" fill="#6e7284" stroke="#111" stroke-width="0.6"/>
<path d="M1249.0,469.8 L1251.2,467.9 L1253.4,466.5 L1255.6,465.7 L1257.7,465.3 L1259.6,465.5 L1261.4,466.2 L1263.1,467.4 L1264.5,469.1 L1265.7,471.3 L1266.7,473.9 L1267.4,476.9 L1267.8,480.2 L1267.9,483.8 L1267.8,487.6 L1267.3,491.5 L1266.6,495.6 L1265.6,499.6 L1264.4,503.6 L1262.9,507.4 L1261.2,511.1 L1259.4,514.5 L1257.4,517.6 L1255.3,520.4 L1253.1,522.7 L1251.0,524.6 L1248.8,526.0 L1246.6,526.8 L1244.5,527.2 L1242.6,527.0 L1240.7,526.3 L1239.1,525.1 L1237.7,523.4 L1236.5,521.2 L1235.5,518.6 L1234.8,515.6 L1234.4,512.3 L1234.3,508.7 L1234.4,504.9 L1234.9,501.0 L1235.6,496.9 L1236.6,492.9 L1237.8,488.9 L1239.3,485.0 L1241.0,481.4 L1242.8,478.0 L1244.8,474.9 L1246.9,472.1Z" fill="none" stroke="#111" stroke-width="1.1"/>
<path d="M1127.8,582.2 L1127.4,583.0 L1127.0,584.0 L1126.8,585.0 L1126.8,585.9 L1127.0,586.7 L1127.3,587.3 L1127.7,587.5 L1128.2,587.4 L1128.8,587.0 L1129.3,586.4 L1129.8,585.5 L1130.1,584.5 L1130.3,583.5 L1130.3,582.6 L1130.2,581.8 L1129.8,581.3 L1129.4,581.0 L1128.9,581.1 L1128.3,581.5Z" fill="#80849a" stroke="#111" stroke-width="0.6"/>
<path d="M1128.3,581.5 L1128.9,581.1 L1129.4,581.0 L1129.8,581.3 L1130.2,581.8 L1130.3,582.6 L1130.3,583.5 L1130.1,584.5 L1129.8,585.5 L1129.3,586.4 L1128.8,587.0 L1128.2,587.4 L1127.7,587.5 L1127.3,587.3 L1127.0,586.7 L1126.8,585.9 L1126.8,585.0 L1127.0,584.0 L1127.4,583.0 L1127.8,582.2Z" fill="none" stroke="#111" stroke-width="1.1"/>
<path d="M1132.1,637.8 L1131.7,638.7 L1131.3,639.7 L1131.2,640.7 L1131.1,641.6 L1131.3,642.4 L1131.6,642.9 L1132.0,643.2 L1132.5,643.1 L1133.1,642.7 L1133.6,642.0 L1134.1,641.2 L1134.4,640.2 L1134.6,639.2 L1134.6,638.3 L1134.5,637.5 L1134.2,636.9 L1133.7,636.7 L1133.2,636.8 L1132.7,637.2Z" fill="#80849a" stroke="#111" stroke-width="0.6"/>
<path d="M1132.7,637.2 L1133.2,636.8 L1133.7,636.7 L1134.2,636.9 L1134.5,637.5 L1134.6,638.3 L1134.6,639.2 L1134.4,640.2 L1134.1,641.2 L1133.6,642.0 L1133.1,642.7 L1132.5,643.1 L1132.0,643.2 L1131.6,642.9 L1131.3,642.4 L1131.1,641.6 L1131.2,640.7 L1131.3,639.7 L1131.7,638.7 L1132.1,637.8Z" fill="none" stroke="#111" stroke-width="1.1"/>
<path d="M1232.3,481.6 L1231.8,482.5 L1231.5,483.4 L1231.3,484.5 L1231.3,485.4 L1231.4,486.2 L1231.7,486.7 L1232.2,486.9 L1232.7,486.9 L1233.2,486.5 L1233.8,485.8 L1234.2,485.0 L1234.6,484.0 L1234.8,483.0 L1234.8,482.0 L1234.6,481.3 L1234.3,480.7 L1233.9,480.5 L1233.4,480.6 L1232.8,481.0Z" fill="#80849a" stroke="#111" stroke-width="0.6"/>
<path d="M1232.8,481.0 L1233.4,480.6 L1233.9,480.5 L1234.3,480.7 L1234.6,481.3 L1234.8,482.0 L1234.8,483.0 L1234.6,484.0 L1234.2,485.0 L1233.8,485.8 L1233.2,486.5 L1232.7,486.9 L1232.2,486.9 L1231.7,486.7 L1231.4,486.2 L1231.3,485.4 L1231.3,484.5 L1231.5,483.4 L1231.8,482.5 L1232.3,481.6Z" fill="none" stroke="#111" stroke-width="1.1"/>
<path d="M1236.6,537.3 L1236.2,538.1 L1235.8,539.1 L1235.6,540.1 L1235.6,541.1 L1235.8,541.8 L1236.1,542.4 L1236.5,542.6 L1237.0,542.5 L1237.6,542.1 L1238.1,541.5 L1238.6,540.6 L1238.9,539.6 L1239.1,538.6 L1239.1,537.7 L1238.9,536.9 L1238.6,536.4 L1238.2,536.2 L1237.7,536.2 L1237.1,536.6Z" fill="#80849a" stroke="#111" stroke-width="0.6"/>
<path d="M1237.1,536.6 L1237.7,536.2 L1238.2,536.2 L1238.6,536.4 L1238.9,536.9 L1239.1,537.7 L1239.1,538.6 L1238.9,539.6 L1238.6,540.6 L1238.1,541.5 L1237.6,542.1 L1237.0,542.5 L1236.5,542.6 L1236.1,542.4 L1235.8,541.8 L1235.6,541.1 L1235.6,540.1 L1235.8,539.1 L1236.2,538.1 L1236.6,537.3Z" fill="none" stroke="#111" stroke-width="1.1"/><line x1="553.2" y1="463.6" x2="501.6" y2="451.3" stroke="#ff00ff" stroke-width="1.0"  shape-rendering="crispEdges"/>
<line x1="747.8" y1="276.3" x2="696.2" y2="263.9" stroke="#ff00ff" stroke-width="1.0"  shape-rendering="crispEdges"/>
<line x1="510.8" y1="453.5" x2="564.7" y2="400.9" stroke="#ff00ff" stroke-width="1.0"  shape-rendering="crispEdges"/>
<line x1="575.0" y1="390.3" x2="705.5" y2="266.1" stroke="#ff00ff" stroke-width="1.0"  shape-rendering="crispEdges"/>
<polygon points="510.8,453.5 514.4,447.0 517.4,450.2" fill="#ff00ff"/>
<polygon points="705.5,266.1 702.0,272.6 698.9,269.4" fill="#ff00ff"/>
<line x1="549.6" y1="611.5" x2="490.0" y2="668.8" stroke="#ff00ff" stroke-width="1.0"  shape-rendering="crispEdges"/>
<line x1="1073.9" y1="737.0" x2="1014.4" y2="794.3" stroke="#ff00ff" stroke-width="1.0"  shape-rendering="crispEdges"/>
<line x1="493.4" y1="665.6" x2="527.0" y2="673.7" stroke="#ff00ff" stroke-width="1.0"  shape-rendering="crispEdges"/>
<line x1="595.2" y1="690.4" x2="1017.8" y2="791.0" stroke="#ff00ff" stroke-width="1.0"  shape-rendering="crispEdges"/>
<polygon points="493.4,665.6 500.7,665.0 499.7,669.3" fill="#ff00ff"/>
<polygon points="1017.8,791.0 1010.5,791.5 1011.5,787.3" fill="#ff00ff"/>
<text transform="matrix(1.4102,0.3375,-0.7565,0.7281,537.0,392.0)" font-family="Liberation Sans" font-size="10" font-weight="bold" font-style="normal" fill="#ff00ff" >5.13±0.05</text>
<text transform="matrix(1.4102,0.3375,-0.7565,0.7281,527.5,677.5)" font-family="Liberation Sans" font-size="10" font-weight="bold" font-style="normal" fill="#ff00ff" >7.93±0.05</text>
<polygon points="778.7,427.3 847.4,443.8 847.9,450.7 779.2,434.2" fill="#003a7a" stroke="#4aa6ff" stroke-width="2"/>
<polygon points="609.1,590.6 677.8,607.0 678.3,613.9 609.6,597.5" fill="none" stroke="#4aa6ff" stroke-width="2"/>
<line x1="659.5" y1="595.4" x2="695.6" y2="560.2" stroke="#4aa6ff" stroke-width="1" />
<line x1="706.4" y1="549.6" x2="817.1" y2="442.5" stroke="#4aa6ff" stroke-width="1" />
<text transform="matrix(1.4102,0.3375,-0.7565,0.7281,668.0,551.0)" font-family="Liberation Sans" font-size="10" font-weight="bold" font-style="normal" fill="#4aa6ff" >4.47±0.05</text>
<circle cx="659.5" cy="595.4" r="3.3" fill="#4aa6ff" stroke="#111" stroke-width="1.1"/>
<circle cx="817.1" cy="442.5" r="3.3" fill="#4aa6ff" stroke="#111" stroke-width="1.1"/>
<rect x="678.7" y="604.0" width="7" height="7" fill="#4aa6ff" stroke="#111" stroke-width="1.1"/>
<rect x="848.8" y="440.7" width="7" height="7" fill="#4aa6ff" stroke="#111" stroke-width="1.1"/>
<line x1="880.9" y1="615.4" x2="975.9" y2="524.1" stroke="#222" stroke-width="1.1" stroke-dasharray="4,3"/>
<line x1="887.7" y1="615.4" x2="984.2" y2="523.4" stroke="#5b8cf0" stroke-width="1.1" />
<line x1="924.5" y1="568.0" x2="929.5" y2="573.0" stroke="#4aa6ff" stroke-width="1.1" />
<line x1="929.5" y1="568.0" x2="924.5" y2="573.0" stroke="#4aa6ff" stroke-width="1.1" />
<line x1="806.0" y1="690.0" x2="821.0" y2="676.0" stroke="#222" stroke-width="1.0" stroke-dasharray="4,3"/>
<text transform="matrix(0.9655,-0.9292,0.1083,1.3958,795.5,561.0)" font-family="Liberation Sans" font-size="14" font-weight="bold" font-style="italic" fill="#78a6fc" stroke="#d4d9e8" stroke-width="1.4" stroke-opacity="0.85" paint-order="stroke">Right Plane</text>
<text transform="matrix(1.7506,0.4189,-1.1168,1.0748,755.0,395.0)" font-family="Liberation Sans" font-size="12" font-weight="normal" font-style="italic" fill="#8aa6e8" fill-opacity="0.8" stroke="#c8d0e4" stroke-width="0.8" stroke-opacity="0.5" paint-order="stroke">Top Plane</text></svg>
<!-- TITLE BAR -->
<div id="title" class="a"></div>
<div id="logo" class="a"></div>
<div id="logoarr" class="a"></div>
<svg class="a" style="left:129px;top:10px" width="6" height="9"><path d="M0 0 L5 4.5 L0 9Z" fill="#1e2470"/></svg>
<!-- SW cube -->
<svg class="a" style="left:0;top:0" width="125" height="28" viewBox="0 0 125 28">
<defs><linearGradient id="lg1" x1="0" y1="0" x2="0" y2="1"><stop offset="0" stop-color="#6a6a70"/><stop offset="0.4" stop-color="#2a2a2e"/><stop offset="1" stop-color="#000"/></linearGradient>
<linearGradient id="lg2" x1="0" y1="0" x2="0" y2="1"><stop offset="0" stop-color="#8a8a90"/><stop offset="0.45" stop-color="#404046"/><stop offset="1" stop-color="#0a0a0a"/></linearGradient></defs>
<path d="M3 8 L12 4 L22 7 L22 19 L13 23.5 L3 20Z" fill="#c81820"/>
<path d="M3 8 L12 4 L22 7 L13 10.5Z" fill="#f05a5a"/>
<path d="M13 10.5 L22 7 L22 19 L13 23.5Z" fill="#a01016"/>
<path d="M3 8 L13 10.5 L13 23.5 L3 20Z" fill="#d42028"/>
<text x="4.5" y="19" font-family="Liberation Sans" font-weight="bold" font-size="10.5" fill="#fff" transform="skewY(8) translate(0 -1)">S</text>
<text x="12.6" y="21.5" font-family="Liberation Sans" font-weight="bold" font-size="9" textLength="9.2" lengthAdjust="spacingAndGlyphs" fill="#fff" transform="skewY(-14) translate(0 3.5)">W</text>
<text transform="translate(27 19.8) scale(0.8 1)" font-family="Liberation Sans" font-weight="bold" font-size="17" letter-spacing="1.7" fill="url(#lg1)" stroke="url(#lg1)" stroke-width="0.5">Solid</text>
<text transform="translate(68.7 19.8) scale(0.8 1)" font-family="Liberation Sans" font-size="17" letter-spacing="2.4" fill="url(#lg2)" stroke="url(#lg2)" stroke-width="0.4">Works</text>
</svg>
<!-- quick access icons -->
<svg class="a" style="left:168px;top:5px" width="14" height="18"><path d="M1.5 0.5 H9 L12.5 4 V17.5 H1.5Z" fill="#f8f9fc" stroke="#8a8fa6"/><path d="M9 0.5 V4 H12.5" fill="#dde0ea" stroke="#8a8fa6"/></svg>
<div class="dd" style="left:189px;top:13px"></div>
<svg class="a" style="left:202px;top:5px" width="18" height="17"><path d="M1 5 H6 L7.5 3 H13 V15 H1Z" fill="#e2a92b"/><path d="M3 8 H17 L14 15.5 H1Z" fill="#f5cf5a" stroke="#c58d19" stroke-width="0.8"/><path d="M11 1 Q15 1 15 5 L17 5 L14 8 L11 5 L13 5 Q13 3 11 3Z" fill="#3ab53a"/></svg>
<div class="dd" style="left:225px;top:13px"></div>
<svg class="a" style="left:239px;top:5px" width="17" height="17"><rect x="0.5" y="0.5" width="16" height="16" fill="#2b45b8" stroke="#1a2a80"/><rect x="3" y="1" width="11" height="6" fill="#e8ecf8"/><rect x="4" y="10" width="9" height="6" fill="#e8ecf8"/><rect x="9" y="11" width="2" height="4" fill="#2b45b8"/></svg>
<div class="dd" style="left:261px;top:13px"></div>
<svg class="a" style="left:275px;top:5px" width="17" height="17"><path d="M4 1 H12 L13 7 H3Z" fill="#c9dcf2" stroke="#8a9ab0" stroke-width="0.8"/><path d="M1 7 H16 V14 H1Z" fill="#b6b8c4" stroke="#6a6c78" stroke-width="0.8"/><rect x="3" y="13" width="11" height="3" fill="#f0f0f0" stroke="#777" stroke-width="0.6"/></svg>
<div class="dd" style="left:297px;top:13px"></div>
<svg class="a" style="left:310px;top:5px" width="17" height="17"><path d="M3 2 L3 8 L9 8" fill="none" stroke="#2a6ad8" stroke-width="2.2"/><path d="M3.5 7.5 Q8 2 12 4 Q16 7 13 12 L9 15.5" fill="none" stroke="#2a6ad8" stroke-width="2.6"/></svg>
<div class="dd" style="left:333px;top:13px"></div>
<svg class="a" style="left:348px;top:5px" width="14" height="18"><path d="M2 1 L2 14 L5 11 L8 16.5 L10 15.5 L7.5 10.5 L11.5 10.5Z" fill="#f4f4f8" stroke="#3a3a40" stroke-width="1"/></svg>
<div class="dd" style="left:369px;top:13px"></div>
<svg class="a" style="left:386px;top:5px" width="10" height="18"><rect x="1" y="0.5" width="8" height="17" rx="3" fill="#222"/><circle cx="5" cy="5" r="2.5" fill="#d62020"/><circle cx="5" cy="12.5" r="2.5" fill="#28b030"/></svg>
<svg class="a" style="left:406px;top:6px" width="17" height="16"><rect x="0.5" y="0.5" width="16" height="15" fill="#e8ecf6" stroke="#5a6a90"/><rect x="3" y="3" width="3" height="2" fill="#5a7ab8"/><rect x="7" y="3.5" width="7" height="1" fill="#5a6a90"/><rect x="3" y="7" width="3" height="2" fill="#5a7ab8"/><rect x="7" y="7.5" width="7" height="1" fill="#5a6a90"/><path d="M2.5 12 L4 13.5 L7 10.5" stroke="#1a9a1a" stroke-width="1.5" fill="none"/><rect x="8" y="11.5" width="6" height="1" fill="#5a6a90"/></svg>
<div class="dd" style="left:428px;top:14px"></div>
<div class="a" style="left:847px;top:7px;font-size:12px;line-height:15px;color:#1a1a2a">Part1 *</div>
<!-- search -->
<div class="a" style="left:1296px;top:4px;width:194px;height:20px;border:1px solid #8c90a6;border-radius:10px;background:linear-gradient(#f4f5fa,#e2e4ee)"></div>
<svg class="a" style="left:1293px;top:3px" width="22" height="22"><circle cx="8.5" cy="8.5" r="6" fill="#eef3fb" stroke="#6b87b8" stroke-width="1.8"/><path d="M12.5 13 L18 19" stroke="#3a6ab0" stroke-width="3" stroke-linecap="round"/></svg>
<div class="dd" style="left:1314px;top:12px;border-top-color:#1a2050"></div>
<div class="a" style="left:1323px;top:7px;font-size:12px;line-height:14px;color:#111">SolidWorks Search</div>
<div class="a" style="left:1498px;top:5px;font-size:15px;line-height:18px;font-weight:bold;color:#8a8ea4">?</div>
<div class="dd" style="left:1518px;top:13px;border-top-color:#3a3e58"></div>
<div class="a" style="left:1535px;top:15px;width:9px;height:3px;background:#8a8ea4"></div>
<svg class="a" style="left:1557px;top:8px" width="12" height="12"><rect x="3.5" y="1" width="8" height="6" fill="none" stroke="#8a8ea4" stroke-width="2"/><rect x="1" y="4.5" width="8" height="6.5" fill="#d0d3e2" stroke="#8a8ea4" stroke-width="2"/></svg>
<svg class="a" style="left:1580px;top:8px" width="12" height="12"><path d="M1 1 L11 11 M11 1 L1 11" stroke="#8a8ea4" stroke-width="2.5"/></svg>
<!-- RIBBON -->
<div id="ribbon" class="a"></div>
<div class="sep" style="left:106px"></div>
<div class="sep" style="left:240px"></div>
<div class="sep" style="left:546px"></div>
<div class="sep" style="left:670px"></div>
<div class="sep" style="left:712px"></div>
<!-- Sketch -->
<svg class="a" style="left:18px;top:35px" width="19" height="18"><path d="M10 1.5 H1.8 V10.5 Q1.8 16.1 7 16.1 H16.8" fill="none" stroke="#0a0aa8" stroke-width="2"/><path d="M2.2 10.8 L3.2 8.6 L13.6 2.6 L15.2 5.2 L4.6 11Z" fill="#f6c818" stroke="#7a5a10" stroke-width="0.7"/><circle cx="15" cy="3.6" r="1.7" fill="#d02828"/></svg>
<div class="rt" style="left:6px;top:53px;width:40px">Sketch</div>
<div class="dd" style="left:23px;top:91px"></div>
<!-- Smart Dimension -->
<svg class="a" style="left:68px;top:36px" width="17" height="16"><path d="M6.7 14.5 L1.1 9.2 L10.4 0.6 L15.7 5.5" fill="none" stroke="#1430e8" stroke-width="1.8"/><path d="M6.7 14.5 L15.7 5.5" stroke="#111" stroke-width="2"/><path d="M4.5 8.5 L10.5 3" stroke="#1430e8" stroke-width="1.1"/><path d="M3.8 9.2 L4.5 6.3 L6.8 8.4Z M11.2 2.3 L8.4 3 L10.4 5.2Z" fill="#1430e8"/></svg>
<div class="rt" style="left:46px;top:53px;width:60px">Smart<br>Dimension</div>
<div class="dd" style="left:73px;top:91px"></div>
<!-- sketch tools grid -->
<svg class="a" style="left:112px;top:34px" width="120" height="62">
<path d="M1.5 1.5 L16 15.5" stroke="#0a0aa0" stroke-width="2.4"/><path d="M12 12 L16 15.5" stroke="#111" stroke-width="2.4"/>
<circle cx="43" cy="8.5" r="6.5" fill="none" stroke="#1a1aa0" stroke-width="2"/><rect x="40" y="8" width="2.5" height="2.5" fill="none" stroke="#c00" stroke-width="0.9"/><path d="M42 8.5 L47 3.5" stroke="#a02020" stroke-width="0.8"/><rect x="46" y="1.5" width="2.5" height="2.5" fill="none" stroke="#c00" stroke-width="0.9"/>
<path d="M73 15.5 V8 Q74 3 78 6 Q82 10 86 7 V1" fill="none" stroke="#1a1ab0" stroke-width="2.6"/>
<path d="M108.5 1.5 L123.5 3 L122.5 16 L108 14.5Z M108.5 8 L123 9.5 M116 2.3 L115.3 15.2" fill="none" stroke="#1a1ab8" stroke-width="1.2" stroke-dasharray="2.4,1.6"/>
<rect x="1.5" y="23.5" width="15" height="12" fill="none" stroke="#1a1ab8" stroke-width="2.2"/><rect x="8" y="28" width="3" height="3" fill="none" stroke="#c00"/><rect x="14" y="22" width="3" height="3" fill="#fff" stroke="#c00"/>
<path d="M37 26 Q43 20 49 26" fill="none" stroke="#1a1aa8" stroke-width="1.8"/><circle cx="37" cy="32" r="0.9" fill="#111"/><circle cx="40" cy="36" r="0.9" fill="#111"/><circle cx="44" cy="37" r="0.9" fill="#111"/><circle cx="48" cy="35" r="0.9" fill="#111"/><circle cx="50" cy="32" r="0.9" fill="#111"/><path d="M41 30 H47 M44 27 V33" stroke="#111" stroke-width="0.9"/>
<ellipse cx="80" cy="30" rx="8" ry="4.5" transform="rotate(-45 80 30)" fill="none" stroke="#1a1ab0" stroke-width="2.2"/><path d="M79 29 L81 31 M81 29 L79 31" stroke="#111" stroke-width="0.8"/>
<text x="108" y="38.5" font-family="Liberation Sans" font-weight="bold" font-size="20" fill="#fff" stroke="#1a1ab8" stroke-width="1.3">A</text>
<rect x="1.5" y="47" width="15" height="10" rx="5" fill="none" stroke="#1a1aa8" stroke-width="2.2"/><rect x="4.5" y="50.5" width="2.5" height="2.5" fill="none" stroke="#c00"/><rect x="11.5" y="50.5" width="2.5" height="2.5" fill="none" stroke="#c00"/>
<path d="M39 52 L41.5 47 H47 L49.5 52 L47 57 H41.5Z" fill="none" stroke="#1a1ab0" stroke-width="1.6"/><path d="M41.5 52 H47 M44.2 49 V55" stroke="#222" stroke-width="1"/>
<path d="M74 46.5 H80 Q86 47 86 53 V60" fill="none" stroke="#9a9ea8" stroke-width="1.8"/><path d="M75 54 H79 M77 52 V56" stroke="#b0b4c0" stroke-width="0.8"/>
<path d="M115 46 V56 M110.5 48.5 L119.5 53.5 M119.5 48.5 L110.5 53.5" stroke="#1a1ab8" stroke-width="1.3"/>
</svg>
<div class="dd" style="left:134px;top:42px"></div>
<div class="dd" style="left:170px;top:42px"></div>
<div class="dd" style="left:206px;top:42px"></div>
<div class="dd" style="left:134px;top:65px"></div>
<div class="dd" style="left:170px;top:65px"></div>
<div class="dd" style="left:206px;top:65px"></div>
<div class="dd" style="left:134px;top:88px"></div>
<div class="dd ddg" style="left:206px;top:88px"></div>
<!-- Trim -->
<svg class="a" style="left:256px;top:36px" width="18" height="16"><path d="M1 5 H17 M1 10 H17 M9 1 V15 M5 2 L13 13" stroke="#a0a4b4" stroke-width="1.8"/></svg>
<div class="rt gr" style="left:240px;top:53px;width:50px">Trim<br>Entities</div>
<div class="dd ddg" style="left:261px;top:91px"></div>
<!-- Convert -->
<svg class="a" style="left:303px;top:35px" width="18" height="18"><path d="M1 1.5 H12 L16.5 5 V16.5 H5.5 L1 12.5 Z" fill="#fff" stroke="#111" stroke-width="1.3"/><path d="M1 1.5 L5.5 5 H16.5 M5.5 5 V16.5" fill="none" stroke="#111" stroke-width="1.1"/><rect x="5.8" y="5.6" width="2" height="10.4" fill="#1a3ae8"/></svg>
<div class="rt" style="left:286px;top:53px;width:52px">Convert<br>Entities</div>
<div class="dd" style="left:308px;top:91px"></div>
<!-- Offset -->
<svg class="a" style="left:350px;top:43px" width="17" height="15"><path d="M1 1 H15 V14 M1 5 H11 V14" fill="none" stroke="#a8acba" stroke-width="1.8"/><path d="M6 14 L15 5" stroke="#a8acba" stroke-width="1.5"/></svg>
<div class="rt gr" style="left:334px;top:60px;width:50px">Offset<br>Entities</div>
<!-- Mirror etc -->
<svg class="a" style="left:384px;top:34px" width="17" height="17"><path d="M8.5 1.5 L16 15.5 H1 Z" fill="#f4f4f8" stroke="#9a9eb0" stroke-width="1.4"/><path d="M8.5 5 V11 M8.5 12.5 V14" stroke="#9a9eb0" stroke-width="1.5"/></svg>
<div class="a gr" style="left:406px;top:37px;font-size:10.6px;line-height:13px">Mirror Entities</div>
<svg class="a" style="left:384px;top:58px" width="17" height="16"><g fill="#a2a6b6"><rect x="1" y="1" width="3" height="3"/><rect x="7" y="1" width="3" height="3"/><rect x="13" y="1" width="3" height="3"/><rect x="1" y="7" width="3" height="3"/><rect x="7" y="7" width="3" height="3"/><rect x="13" y="7" width="3" height="3"/><rect x="1" y="13" width="3" height="3"/><rect x="7" y="13" width="3" height="3"/><rect x="13" y="13" width="3" height="3"/></g></svg>
<div class="a gr" style="left:406px;top:60px;font-size:10.6px;line-height:13px">Linear Sketch Pattern</div>
<div class="dd ddg" style="left:535px;top:65px"></div>
<svg class="a" style="left:384px;top:81px" width="18" height="17"><path d="M1 1 H9 M1 1 V9" stroke="#a2a6b6" stroke-width="1.6" stroke-dasharray="2,1.5"/><path d="M4 4 L10 10 M10 10 V7 M10 10 H7" stroke="#8a8ea4" stroke-width="1.4" fill="none"/><rect x="10.5" y="9.5" width="6" height="6" fill="none" stroke="#a2a6b6" stroke-width="1.8"/></svg>
<div class="a gr" style="left:406px;top:83px;font-size:10.6px;line-height:13px">Move Entities</div>
<div class="dd ddg" style="left:535px;top:88px"></div>
<!-- Display/Delete -->
<svg class="a" style="left:579px;top:35px" width="18" height="17"><path d="M2 15.5 H16" stroke="#a0a4b4" stroke-width="1.6"/><circle cx="6" cy="10" r="3" fill="none" stroke="#a0a4b4" stroke-width="1.3"/><path d="M9 1 V10 M8 8 L12 12 L14 8" fill="none" stroke="#a0a4b4" stroke-width="1.3"/></svg>
<div class="rt gr" style="left:552px;top:53px;width:72px">Display/Delete<br>Relations</div>
<div class="dd ddg" style="left:584px;top:91px"></div>
<!-- Repair -->
<svg class="a" style="left:640px;top:42px" width="18" height="17"><path d="M1 5 H7 M4 2 V8" stroke="#a8acba" stroke-width="1.5"/><path d="M8 15 L14 3 L16 4 L10 15.5Z" fill="none" stroke="#a8acba" stroke-width="1.2"/></svg>
<div class="rt gr" style="left:626px;top:60px;width:44px">Repair<br>Sketch</div>
<!-- Quick Snaps -->
<svg class="a" style="left:683px;top:36px" width="18" height="17"><path d="M1.5 16 V1.5 H16" fill="none" stroke="#a0a4b4" stroke-width="1.8"/><circle cx="9.5" cy="9" r="4.5" fill="none" stroke="#a0a4b4" stroke-width="1.2"/><circle cx="9.5" cy="9" r="1.5" fill="#a0a4b4"/></svg>
<div class="rt gr" style="left:671px;top:53px;width:42px">Quick<br>Snaps</div>
<div class="dd ddg" style="left:688px;top:91px"></div>
<!-- Rapid Sketch -->
<svg class="a" style="left:726px;top:41px" width="19" height="18"><path d="M1.5 1.5 V10 Q1.5 16 8 16 H14" fill="none" stroke="#1a1ab0" stroke-width="2.4"/><path d="M9 2 L5 9 H9 L6 15 L14 7 H10 L13 2Z" fill="#f5c518" stroke="#b06a00" stroke-width="0.7"/><circle cx="15" cy="3.5" r="2.2" fill="#e02020"/></svg>
<div class="rt" style="left:713px;top:60px;width:44px">Rapid<br>Sketch</div>
<!-- 3DS logo -->
<svg class="a" style="left:1500px;top:28px" width="99" height="74" viewBox="0 0 99 74"><g fill="#d6dae8">
<path d="M44.6 6.4 C52 3 64 2.5 70 6.5 C74.5 10 72.5 17 67 21.5 C60 27 52 31 46.8 33 C55 27 62.5 20.5 65.5 14.5 C67.5 10.5 66 8 61 7.5 C54 6.8 48 6.6 44.6 6.4Z"/>
<path d="M28.3 40 C38 37 53 36 58.5 41.5 C62.5 46.5 57 55 48 61 C40 66 30 69.5 21 71.5 C32 66 43 60 49.5 53.5 C53.5 48.5 53 44.5 47.5 43 C41 41.5 34 41 28.3 40Z"/>
<path d="M37.8 44.5 L39.6 46 C34 54 29 63 22 71.5 L19.5 71.8 C24 62 30 52 37.8 44.5Z"/>
<path d="M91 30 C80 27 68 27 64 32 C61 37 66 42 73 48 C80 54 87 59 85 64 C82 68 68 67 53 62 C66 63 76 63.5 79 60.5 C82 57 84 52.5 79.5 47.5 C74 42 69 38 69.5 34 C70.5 30 82 29 91 30Z"/>
</g></svg>

<div class="tab" style="left:0;width:66px;border-left:none">Features</div>
<div class="tab tabact" style="left:66px;width:55px">Sketch</div>
<div class="tab" style="left:121px;width:63px">Evaluate</div>
<div class="tab" style="left:184px;width:68px;border-left:none">DimXpert</div>
<div class="tab" style="left:250px;width:99px">Office Products</div>
<div class="a" style="left:67px;top:100px;width:53px;height:4px;background:#eceef4"></div>

<div class="a" style="left:0;top:123px;width:188px;height:703px;background:#e4e6f0"></div>
<div class="a" style="left:0;top:125px;width:186px;height:28px;background:linear-gradient(#d9dcea,#cfd2e3);border-top:1px solid #9fa3b6;border-bottom:1px solid #8e92a8"></div>
<!-- splitter -->
<div class="a" style="left:186px;top:123px;width:2px;height:703px;background:#8d90a2"></div>
<div class="a" style="left:188px;top:123px;width:1px;height:703px;background:#5f6274"></div>
<svg class="a" style="left:187px;top:450px" width="10" height="30"><path d="M0.5 0.5 H6 Q9.5 0.5 9.5 4 V26 Q9.5 29.5 6 29.5 H0.5Z" fill="#e8eaf3" stroke="#8a8ea4"/><path d="M7 6 L3 8.5 L7 11Z M7 13 L3 15.5 L7 18Z M7 20 L3 22.5 L7 25Z" fill="#3a4aa8"/></svg>
<!-- panel tabs -->
<div class="a" style="left:1px;top:131px;width:26px;height:22px;border:1px solid #9ea2b8;border-bottom:none;border-radius:4px 4px 0 0;background:linear-gradient(#d8dbe9,#c6c9db)"></div>
<div class="a" style="left:28px;top:131px;width:27px;height:22px;border:1px solid #b0b4c6;border-bottom:none;border-radius:4px 4px 0 0;background:linear-gradient(#f4f5fa,#e6e8f1)"></div>
<div class="a" style="left:56px;top:131px;width:27px;height:22px;border:1px solid #9ea2b8;border-bottom:none;border-radius:4px 4px 0 0;background:linear-gradient(#d8dbe9,#c6c9db)"></div>
<div class="a" style="left:84px;top:131px;width:27px;height:22px;border:1px solid #9ea2b8;border-bottom:none;border-radius:4px 4px 0 0;background:linear-gradient(#d8dbe9,#c6c9db)"></div>
<svg class="a" style="left:4px;top:133px" width="20" height="18"><path d="M2 5 L7 2 L10 4 L13 2 L17 9 L17 13 L12 16 L2 9Z" fill="#f2c400" stroke="#111" stroke-width="1.2"/><path d="M7 2 L12 10 L17 9 M12 10 V16" fill="none" stroke="#111" stroke-width="0.9"/></svg>
<svg class="a" style="left:32px;top:133px" width="20" height="18"><rect x="2.5" y="5.5" width="10" height="12" fill="#fff" stroke="#111" stroke-width="1.2"/><path d="M4 9 H11 M4 11.5 H11 M4 14 H11" stroke="#4a90e0" stroke-width="1"/><path d="M8 6 L14 1 L18 3 L18 6 L12 9Z" fill="#e8b878" stroke="#8a5a20" stroke-width="0.7"/></svg>
<svg class="a" style="left:60px;top:133px" width="20" height="18"><path d="M3 1 V17 M3 5 H9 M3 13 H9" stroke="#777" stroke-width="1.4"/><rect x="8.5" y="2" width="6" height="6" rx="1.5" fill="#f6c800" stroke="#111" stroke-width="1.1"/><rect x="10.5" y="10" width="6" height="6" rx="1.5" fill="#f6c800" stroke="#111" stroke-width="1.1"/></svg>
<svg class="a" style="left:88px;top:133px" width="20" height="18"><circle cx="10" cy="9" r="5.5" fill="none" stroke="#c040d8" stroke-width="1.6"/><path d="M10 1 V17 M2 9 H18" stroke="#c040d8" stroke-width="1.6"/></svg>
<!-- DimXpert header -->
<div class="a" style="left:1px;top:156px;width:184px;height:22px;border:1px solid #1e2250;background:linear-gradient(#a2a6ba 0%,#8a8ea4 50%,#8b8fa6 70%,#9ea2b6 100%)"></div>
<svg class="a" style="left:3px;top:158px" width="16" height="16"><path d="M1.5 8.5 L7 3 L13 9 L8 14Z" fill="none" stroke="#1a3ae0" stroke-width="1.6"/><path d="M8 14 L13.5 8.5" stroke="#111" stroke-width="2"/></svg>
<div class="a" style="left:22px;top:159px;font-size:13px;line-height:16px;font-weight:bold;color:#fff">DimXpert</div>
<div class="a" style="left:168px;top:158px;font-size:14px;line-height:16px;font-weight:bold;color:#e8e8ee">?</div>
<svg class="a" style="left:4px;top:183px" width="16" height="14"><path d="M1.5 7.5 L6 12 L14.5 2.5" fill="none" stroke="#10a010" stroke-width="2.6"/></svg>
<!-- Value/Leaders/Other tabs -->
<div class="a" style="left:0;top:236px;width:186px;height:1px;background:#8a8ea4"></div>
<div class="a" style="left:2px;top:215px;width:39px;height:22px;border:1px solid #8a8ea4;border-bottom:none;border-radius:6px 6px 0 0;background:#eceef6;font-size:11.5px;line-height:19px;text-align:center;color:#1a1a30">Value</div>
<div class="a" style="left:43px;top:216px;width:50px;height:20px;border:1px solid #8a8ea4;border-radius:6px 6px 0 0;background:linear-gradient(#d3d6e5,#c3c6d8);font-size:11.5px;line-height:18px;text-align:center;color:#2a1a30">Leaders</div>
<div class="a" style="left:95px;top:216px;width:40px;height:20px;border:1px solid #8a8ea4;border-radius:6px 6px 0 0;background:linear-gradient(#d3d6e5,#c3c6d8);font-size:11.5px;line-height:18px;text-align:center;color:#2a1a30">Other</div>
<!-- scrollbar -->
<div class="a" style="left:170px;top:253px;width:16px;height:570px;background:#eef0f6;border-left:1px solid #c9ccd8"></div>
<svg class="a" style="left:174px;top:258px" width="8" height="5"><path d="M0 4.5 L4 0.5 L8 4.5Z" fill="#333"/></svg>
<div class="a" style="left:172px;top:270px;width:13px;height:407px;border:1px solid #9a9eae;border-radius:2px;background:linear-gradient(90deg,#e6e8ee,#fafafc 50%,#e0e2ea)"></div>
<svg class="a" style="left:174px;top:467px" width="9" height="9"><path d="M0 1.5 H9 M0 4.5 H9 M0 7.5 H9" stroke="#555" stroke-width="1"/></svg>
<svg class="a" style="left:174px;top:811px" width="8" height="5"><path d="M0 0.5 L4 4.5 L8 0.5Z" fill="#333"/></svg>
<!-- group boxes -->
<style>
.gb{position:absolute;left:3px;width:166px;border:1px solid #a2a6b8;background:#e4e6f0}
.gh{position:absolute;left:0;top:0;width:164px;height:19px;background:linear-gradient(#e6e8f1,#c8cbdb);border-bottom:1px solid #a9adbf;font-size:11.5px;line-height:18px;font-weight:bold;color:#333a58;padding-left:4px}
.chev{position:absolute;right:5px;top:4px}
.inp{position:absolute;height:20px;background:#fff;border:1px solid #9a9eb0;font-size:11px;line-height:18px;padding-left:4px;color:#222;white-space:nowrap}
.sel{position:absolute;height:21px;border:1px solid #8a8ea0;border-radius:3px;background:linear-gradient(#f8f8fb,#e4e5ec 60%,#d9dbe4);font-size:11.5px;line-height:19px;padding-left:4px;color:#111}
.sel:after{content:"";position:absolute;right:5px;top:8px;border-left:4px solid transparent;border-right:4px solid transparent;border-top:4.5px solid #111}
.btn{position:absolute;width:23px;height:23px;border:1px solid #9a9eae;border-radius:4px;background:linear-gradient(#f6f7fa,#d8dae4)}
</style>
<div class="gb" style="top:252px;height:105px"><div class="gh">Reference Features<svg class="chev" width="10" height="10"><path d="M1 5 L5 1.5 L9 5 M1 9 L5 5.5 L9 9" fill="none" stroke="#333" stroke-width="1.2"/></svg></div></div>
<svg class="a" style="left:12px;top:274px" width="22" height="20"><path d="M1 10.5 L8.5 18 M10.5 1 L18.5 8" stroke="#111" stroke-width="1.1"/><path d="M3.8 14.6 L11.5 6.5" stroke="#e01010" stroke-width="1.2"/><path d="M13.2 4.6 L8.6 6.5 L11.4 9.2Z" fill="#e01010"/><circle cx="17" cy="8.2" r="1.8" fill="#e01010"/></svg>
<div class="a" style="left:43px;top:275px;width:11px;height:20px;background:#8a10f0;border:1px solid #c8c8d8"></div>
<div class="inp" style="left:55px;top:275px;width:110px;border:2px solid #64aee8;color:#666;padding-left:3px">Plane7&lt;0&gt;</div>
<div class="btn" style="left:55px;top:300px"><svg width="21" height="21" style="position:absolute;left:0;top:0"><path d="M7 17 V5 M3.5 8 L7 3.5 L10.5 8" fill="none" stroke="#111" stroke-width="2.2"/><path d="M14 4 V16 M10.5 13 L14 17.5 L17.5 13" fill="none" stroke="#111" stroke-width="2.2"/></svg></div>
<svg class="a" style="left:12px;top:329px" width="22" height="20"><path d="M1 10.5 L8.5 18 M10.5 1 L18.5 8" stroke="#111" stroke-width="1.1"/><path d="M5.5 15 L11.5 6.5" stroke="#e01010" stroke-width="1.2"/><path d="M13.2 4.6 L8.6 6.5 L11.4 9.2Z" fill="#e01010"/><circle cx="7.5" cy="15.8" r="1.8" fill="#e01010"/></svg>
<div class="a" style="left:43px;top:330px;width:11px;height:20px;background:#10c040;border:1px solid #c8c8d8"></div>
<div class="inp" style="left:55px;top:330px;width:110px;color:#666">Plane6&lt;0&gt;</div>
<!-- Style -->
<div class="gb" style="top:365px;height:82px"><div class="gh">Style<svg class="chev" width="10" height="10"><path d="M1 5 L5 1.5 L9 5 M1 9 L5 5.5 L9 9" fill="none" stroke="#333" stroke-width="1.2"/></svg></div></div>
<div class="btn" style="left:38px;top:388px"></div><div class="btn" style="left:62px;top:388px"></div><div class="btn" style="left:86px;top:388px"></div><div class="btn" style="left:110px;top:388px"></div><div class="btn" style="left:134px;top:388px"></div>
<svg class="a" style="left:38px;top:388px" width="120" height="23">
<rect x="4" y="11" width="7" height="9" fill="#fff" stroke="#333" stroke-width="0.8"/><path d="M6 9 L9 5 M12 10 L18 4" stroke="#e02020" stroke-width="1"/><path d="M5 5 L8 3" stroke="#2a9a2a" stroke-width="1.2"/>
<g transform="translate(24 0)"><path d="M4 10 H9 L10 9 H16 V19 H4Z" fill="#e8c040" stroke="#555" stroke-width="0.7"/><circle cx="10" cy="15" r="1.6" fill="#2040d0"/><path d="M14 4 V11 M10.5 7.5 H17.5" stroke="#10a010" stroke-width="2.4"/></g>
<g transform="translate(48 0)"><path d="M4 10 H9 L10 9 H16 V19 H4Z" fill="#e8c040" stroke="#555" stroke-width="0.7"/><circle cx="10" cy="15" r="1.6" fill="#2040d0"/><path d="M12 4 L18 10 M18 4 L12 10" stroke="#e01010" stroke-width="1.8"/></g>
<g transform="translate(72 0)"><path d="M4 10 H9 L10 9 H16 V19 H4Z" fill="#e8c040" stroke="#555" stroke-width="0.7"/><circle cx="10" cy="15" r="1.6" fill="#2040d0"/><rect x="12" y="4" width="7" height="7" fill="#eee" stroke="#333" stroke-width="0.8"/><path d="M5 7 L8 4" stroke="#2a9a2a" stroke-width="1.2"/></g>
<g transform="translate(96 0)"><path d="M4 10 H9 L10 9 H16 V19 H4Z" fill="#e8c040" stroke="#555" stroke-width="0.7"/><circle cx="10" cy="15" r="1.6" fill="#2040d0"/><path d="M13 3 H17 L19 5 V12 H13Z" fill="#fff" stroke="#333" stroke-width="0.8"/><path d="M5 7 L8 4" stroke="#2a9a2a" stroke-width="1.2"/></g>
</svg>
<div class="sel" style="left:43px;top:418px;width:122px">&lt;NONE&gt;</div>
<!-- Tolerance -->
<div class="gb" style="top:455px;height:161px"><div class="gh">Tolerance/Precision<svg class="chev" width="10" height="10"><path d="M1 5 L5 1.5 L9 5 M1 9 L5 5.5 L9 9" fill="none" stroke="#333" stroke-width="1.2"/></svg></div></div>
<div class="a" style="left:6px;top:482px;font-size:9px;line-height:10px;color:#111;letter-spacing:-0.5px">1.50</div>
<div class="a" style="left:19px;top:477px;font-size:8px;line-height:8px;color:#e01010;font-weight:bold">+.01<br>-.01</div>
<div class="sel" style="left:43px;top:477px;width:122px">Symmetric</div>
<svg class="a" style="left:10px;top:509px" width="14" height="14"><path d="M7 1 V13 M1 7 H13" stroke="#e01010" stroke-width="2.2"/></svg>
<div class="inp" style="left:43px;top:505px;width:122px;border-color:#c8cad6;color:#111">0.05cm</div>
<div class="a" style="left:43px;top:535px;width:13px;height:13px;border:1px solid #8a8ea0;background:linear-gradient(#e0e2ea,#f8f8fb)"></div>
<div class="a" style="left:59px;top:535px;font-size:11.5px;line-height:14px;color:#111">Show parentheses</div>
<div class="a" style="left:18px;top:557px;font-size:7px;line-height:7px;color:#111">.01</div>
<div class="a" style="left:7px;top:564px;font-size:8px;line-height:8px;color:#e01010;font-weight:bold;letter-spacing:-0.5px">X.XXX</div>
<div class="a" style="left:18px;top:572px;font-size:7px;line-height:7px;color:#111">.01</div>
<div class="sel" style="left:43px;top:558px;width:122px">.12</div>
<div class="a" style="left:6px;top:593px;font-size:9px;line-height:10px;color:#111;letter-spacing:-0.5px">1.50</div>
<div class="a" style="left:19px;top:588px;font-size:8px;line-height:8px;color:#e01010;font-weight:bold">+.XX<br>-.XX</div>
<div class="sel" style="left:43px;top:587px;width:122px">.12</div>
<!-- Primary Value -->
<div class="gb" style="top:624px;height:81px"><div class="gh">Primary Value<svg class="chev" width="10" height="10"><path d="M1 5 L5 1.5 L9 5 M1 9 L5 5.5 L9 9" fill="none" stroke="#333" stroke-width="1.2"/></svg></div></div>
<div class="inp" style="left:43px;top:646px;width:122px;background:#e6e8f0;border-color:#b4b7c6;color:#8a8c98">TXD3@Scheme2</div>
<div class="inp" style="left:43px;top:674px;width:101px;height:22px;line-height:20px;background:#e6e8f0;border-color:#b4b7c6;color:#8a8c98">4.4661808cm</div>
<svg class="a" style="left:147px;top:676px" width="18" height="20"><path d="M5 6 L9 2 L13 6Z M5 14 L9 18 L13 14Z" fill="#9a9ca8"/></svg>
<!-- Dimension Text -->
<div class="gb" style="top:713px;height:113px;border-bottom:none"><div class="gh">Dimension Text<svg class="chev" width="10" height="10"><path d="M1 5 L5 1.5 L9 5 M1 9 L5 5.5 L9 9" fill="none" stroke="#333" stroke-width="1.2"/></svg></div></div>
<div class="btn" style="left:8px;top:735px"></div><div class="btn" style="left:35px;top:735px"></div><div class="btn" style="left:62px;top:735px"></div><div class="btn" style="left:89px;top:735px"></div>
<svg class="a" style="left:8px;top:735px" width="110" height="23">
<path d="M6 6 Q3 11.5 6 17 M17 6 Q20 11.5 17 17" fill="none" stroke="#d01010" stroke-width="1.5"/><path d="M8 9 L12 14 M12 9 L8 14 M11 9 L15 14 M15 9 L11 14" stroke="#111" stroke-width="0.9"/>
<g transform="translate(27 0)"><path d="M3 12 H8 M15 12 H20" stroke="#111" stroke-width="1"/><path d="M3 12 L5 10 M3 12 L5 14 M20 12 L18 10 M20 12 L18 14" stroke="#111" stroke-width="1"/><path d="M9 9 L14 15 M14 9 L9 15" stroke="#d01010" stroke-width="1.1"/></g>
<g transform="translate(54 0)"><rect x="3" y="6.5" width="17" height="10" rx="5" fill="none" stroke="#d01010" stroke-width="1.5"/><path d="M7 9 L11 14 M11 9 L7 14 M11 9 L15 14 M15 9 L11 14" stroke="#111" stroke-width="0.9"/></g>
<g transform="translate(81 0)"><path d="M3 15 H20 M3 15 L5 13 M3 15 L5 17 M20 15 L18 13 M20 15 L18 17" stroke="#111" stroke-width="1"/><path d="M8 14 L16 6" stroke="#d01010" stroke-width="1"/><path d="M15 4 L19 9 M19 4 L15 9" stroke="#d01010" stroke-width="1"/></g>
</svg>
<div class="a" style="left:8px;top:766px;width:157px;height:58px;background:#fff;border:1px solid #9a9eb0;border-bottom:none"></div>
<div class="a" style="left:9px;top:767px;font-size:9.5px;line-height:11px;color:#111">&lt;DIM&gt;</div>

<!-- bottom tabs -->
<div class="a" style="left:0;top:825px;width:1599px;height:16px;background:#e3e6ef;border-top:1px solid #111"></div>
<div class="a" style="left:0;top:823px;width:188px;height:2px;background:#a4a7b8"></div>
<div class="a" style="left:0;top:826px;width:2px;height:15px;background:#6a9a8a"></div>
<div class="a" style="left:2px;top:826px;width:66px;height:14px;background:#b9bccb;border:1px solid #8e92a4;border-top:2px solid #111"></div>
<svg class="a" style="left:3px;top:827px" width="64" height="13"><g fill="#8e92a6"><rect x="3" y="2.5" width="1.3" height="8"/><path d="M12 2.5 V10.5 L5.5 6.5Z"/><path d="M22 2.5 V10.5 L15.5 6.5Z" transform="translate(0 0)"/><path d="M36 2.5 V10.5 L42.5 6.5Z"/><path d="M52 2.5 V10.5 L58.5 6.5Z"/><rect x="59" y="2.5" width="1.3" height="8"/></g><path d="M16 0 V13 M32 0 V13 M48 0 V13" stroke="#a3a7b8" stroke-width="1"/></svg>
<div class="a" style="left:68px;top:825px;width:56px;height:16px;background:linear-gradient(#f4f5f9,#dfe1ea);border-left:1px solid #9a9eb0;border-right:1px solid #9a9eb0;font-size:12px;line-height:14px;font-weight:bold;text-align:center;color:#111">Model</div>
<div class="a" style="left:124px;top:827px;width:102px;height:13px;background:linear-gradient(#c9ccdb,#bbbecf);border:1px solid #6e7286;font-size:12px;line-height:11px;text-align:center;color:#111">Motion Study 1</div>
<!-- status bar -->
<div class="a" style="left:0;top:841px;width:1599px;height:21px;background:linear-gradient(#d7dae8,#c8cbdb);border-top:1px solid #a4a8ba"></div>
<div class="a" style="left:2px;top:845px;font-size:12px;line-height:14px;color:#111">SolidWorks Premium 2010</div>
<div class="a" style="left:0;top:860px;width:1599px;height:2px;background:#3a3c48"></div>
<div class="a" style="left:60px;top:860px;width:58px;height:2px;background:#fff"></div>
<div class="a" style="left:1400px;top:843px;width:1px;height:17px;background:#aeb2c2"></div>
<div class="a" style="left:1408px;top:843px;width:1px;height:17px;background:#aeb2c2"></div>
<div class="a" style="left:1478px;top:843px;width:1px;height:17px;background:#aeb2c2"></div>
<div class="a" style="left:1486px;top:843px;width:1px;height:17px;background:#aeb2c2"></div>
<div class="a" style="left:1494px;top:843px;width:1px;height:17px;background:#aeb2c2"></div>
<div class="a" style="left:1413px;top:845px;font-size:12px;line-height:14px;color:#111">Editing Part</div>
<svg class="a" style="left:1506px;top:843px" width="15" height="15"><rect x="0.5" y="0.5" width="13" height="13" fill="#f4f6fa" stroke="#2a3a8a"/><text x="3" y="11.5" font-family="Liberation Sans" font-size="11" font-weight="bold" fill="#10a010">?</text></svg>
<svg class="a" style="left:1570px;top:843px" width="16" height="15"><path d="M2 9 L9 2 L14 2 L14 7 L7 14Z" fill="#f2c230" stroke="#a07010" stroke-width="1"/><circle cx="11.5" cy="4.5" r="1.2" fill="#fff" stroke="#a07010" stroke-width="0.6"/></svg>
<!-- viewport: tree item -->
<svg class="a" style="left:191px;top:130px" width="12" height="12"><rect x="0.5" y="0.5" width="9" height="9" fill="#dfe1ea" stroke="#7a7e90"/><path d="M2.5 5 H7.5 M5 2.5 V7.5" stroke="#111" stroke-width="1"/></svg>
<div class="a" style="left:200px;top:135px;width:6px;height:1px;background:#8a8ea0"></div>
<svg class="a" style="left:204px;top:126px" width="20" height="18"><path d="M2 5 L7 2 L10 4 L13 2 L17 9 L17 13 L12 16 L2 9Z" fill="#f2c400" stroke="#111" stroke-width="1.2"/><path d="M7 2 L12 10 L17 9 M12 10 V16" fill="none" stroke="#111" stroke-width="0.9"/></svg>
<div class="a" style="left:226px;top:129px;font-size:12px;line-height:14px;color:#111;white-space:nowrap">Part1&nbsp; (Default&lt;&lt;Default&gt;_...</div>
<!-- heads-up toolbar -->
<svg class="a" style="left:752px;top:107px" width="280" height="22">
<g transform="translate(2 2)"><circle cx="7" cy="7" r="5.5" fill="#eef2fa" stroke="#6a7a9a" stroke-width="1.3"/><path d="M11 11 L15.5 15.5" stroke="#3a6ab8" stroke-width="2.5"/><path d="M7 4 V10 M4 7 H10" stroke="#4a5a7a" stroke-width="0.9"/></g>
<g transform="translate(25 2)"><circle cx="7" cy="7" r="5.5" fill="#eef2fa" stroke="#6a7a9a" stroke-width="1.3"/><path d="M11 11 L15.5 15.5" stroke="#3a6ab8" stroke-width="2.5"/><rect x="4.5" y="4.5" width="5" height="5" fill="none" stroke="#4a5a7a" stroke-width="0.9" stroke-dasharray="1.5,1"/></g>
<g transform="translate(48 2)"><path d="M2 5 L10 13 L13 10 L5 2Z" fill="#c8daf2" stroke="#3a6ab8" stroke-width="1.2"/><path d="M10 2 H16 M13 -1 L16 2 L13 5" fill="none" stroke="#3a6ab8" stroke-width="1.4"/></g>
<g transform="translate(71 2)"><path d="M2 3 Q7 0 12 3 V15 Q7 12 2 15Z" fill="#f2c400" stroke="#333" stroke-width="1"/><rect x="4" y="3" width="6" height="11" fill="#4a6ab8"/></g>
<g transform="translate(94 2)"><path d="M1 5 L5 1 H15 V11 L11 15 H1Z" fill="#8ab8ea" stroke="#2a4a8a" stroke-width="1"/><path d="M1 5 H11 V15 M11 5 L15 1" fill="none" stroke="#2a4a8a" stroke-width="1"/><path d="M8 2 V8 M12 8 H8" stroke="#e02020" stroke-width="1.2"/></g>
<path d="M115 10 L121 10 L118 13.5Z" fill="#333"/>
<g transform="translate(128 2)"><path d="M1 5 L5 1 H15 V11 L11 15 H1Z" fill="#b8d4f4" stroke="#3a5a8a" stroke-width="1"/><path d="M1 5 H11 V15 M11 5 L15 1" fill="none" stroke="#3a5a8a" stroke-width="1"/><rect x="6" y="6" width="4" height="8" fill="#3a7ad8"/></g>
<path d="M148 10 L154 10 L151 13.5Z" fill="#333"/>
<g transform="translate(160 3)"><circle cx="4" cy="10" r="3.2" fill="none" stroke="#8a8ea0" stroke-width="1.3"/><circle cx="12" cy="11" r="3.2" fill="none" stroke="#8a8ea0" stroke-width="1.3"/><path d="M2 7 Q3 1 6 2 M10 8 L14 4" fill="none" stroke="#8a8ea0" stroke-width="1.2"/></g>
<path d="M180 10 L186 10 L183 13.5Z" fill="#333"/>
<g transform="translate(193 2)"><circle cx="8" cy="8" r="7.5" fill="#2fa83a"/><path d="M8 8 L8 0.5 A7.5 7.5 0 0 0 0.5 8Z" fill="#2a6ae0"/><path d="M8 8 L8 0.5 A7.5 7.5 0 0 1 15.5 8Z" fill="#e02a2a"/><path d="M8 8 L15.5 8 A7.5 7.5 0 0 1 8 15.5Z" fill="#f2c400"/></g>
<g transform="translate(216 1)"><circle cx="8" cy="7" r="6" fill="#2fa83a"/><path d="M8 7 L8 1 A6 6 0 0 0 2 7Z" fill="#2a6ae0"/><path d="M8 7 L8 1 A6 6 0 0 1 14 7Z" fill="#e02a2a"/><path d="M1 14 H15 V18 H1Z" fill="#222"/><path d="M1 14 H4 V16 H1Z M7 14 H10 V16 H7Z M13 16 H16 V18 H13Z M4 16 H7 V18 H4Z M10 16 H13 V18 H10Z" fill="#eee"/></g>
<path d="M236 10 L242 10 L239 13.5Z" fill="#333"/>
<g transform="translate(250 2)"><circle cx="8" cy="8" r="7.5" fill="#c89a10"/><circle cx="7" cy="6.5" r="5" fill="#f2d040"/><circle cx="6" cy="5" r="2" fill="#fff8c0"/></g>
<path d="M270 10 L276 10 L273 13.5Z" fill="#333"/>
</svg>
<!-- viewport window controls -->
<div class="a" style="left:1531px;top:118px;width:9px;height:3px;background:#6a6e84;border-bottom:1px solid #3a3e50"></div>
<svg class="a" style="left:1552px;top:111px" width="12" height="12"><rect x="3.5" y="1.5" width="8" height="6" fill="none" stroke="#6a6e84" stroke-width="2"/><rect x="1" y="5" width="8" height="6" fill="#c5c9d5" stroke="#6a6e84" stroke-width="2"/></svg>
<svg class="a" style="left:1577px;top:112px" width="11" height="11"><path d="M1 1 L10 10 M10 1 L1 10" stroke="#6a6e84" stroke-width="2.2"/></svg>
<!-- task pane -->
<svg class="a" style="left:1576px;top:163px" width="23" height="170">
<g stroke="#9a9eb2" fill="url(#tpg)"><path d="M23 0.5 H5 Q0.5 0.5 0.5 5 V19 Q0.5 23.5 5 23.5 H23"/><path d="M23 24.5 H5 Q0.5 24.5 0.5 29 V43 Q0.5 47.5 5 47.5 H23"/><path d="M23 48.5 H5 Q0.5 48.5 0.5 53 V67 Q0.5 71.5 5 71.5 H23"/><path d="M23 72.5 H5 Q0.5 72.5 0.5 77 V91 Q0.5 95.5 5 95.5 H23"/><path d="M23 96.5 H5 Q0.5 96.5 0.5 101 V115 Q0.5 119.5 5 119.5 H23"/><path d="M23 120.5 H5 Q0.5 120.5 0.5 125 V139 Q0.5 143.5 5 143.5 H23"/><path d="M23 144.5 H5 Q0.5 144.5 0.5 149 V163 Q0.5 167.5 5 167.5 H23"/></g>
<defs><linearGradient id="tpg" x1="0" y1="0" x2="1" y2="0"><stop offset="0" stop-color="#e8eaf2"/><stop offset="1" stop-color="#cfd2e0"/></linearGradient></defs>
<g transform="translate(4 4)"><path d="M1 8 L8 1 L15 8 V15 H1Z" fill="#f6d060" stroke="#8a5a10" stroke-width="1"/><rect x="6" y="9" width="4" height="6" fill="#c07020"/><rect x="11" y="1" width="2" height="5" fill="#c02020"/></g>
<g transform="translate(4 28)"><rect x="1" y="8" width="4" height="7" fill="#2aa02a" stroke="#111" stroke-width="0.6"/><rect x="6" y="4" width="4" height="11" fill="#f2c400" stroke="#111" stroke-width="0.6"/><rect x="11" y="1" width="4" height="14" fill="#3a7ae0" stroke="#111" stroke-width="0.6"/></g>
<g transform="translate(4 53)"><path d="M1 3 H6 L7 5 H14 V14 H1Z" fill="#e8b030" stroke="#a07010" stroke-width="0.8"/><path d="M3 7 H16 L14 14 H1Z" fill="#f8dc70" stroke="#a07010" stroke-width="0.8"/></g>
<g transform="translate(4 76)"><path d="M2 4 L9 1 L16 4 V13 L9 16 L2 13Z" fill="#d02020"/><text x="3" y="12" font-family="Liberation Sans" font-size="9" font-weight="bold" fill="#fff">S</text><circle cx="12" cy="10" r="3" fill="none" stroke="#5a8ad0" stroke-width="1.3"/></g>
<g transform="translate(4 100)"><rect x="1" y="1" width="15" height="10" fill="#fff" stroke="#3a5aa0" stroke-width="0.8"/><rect x="3" y="3" width="5" height="3" fill="#f2c400"/><rect x="9" y="3" width="5" height="2" fill="#3a5aa0"/><path d="M1 14 H8 M6 12 L8 14 L6 16" stroke="#1a2ad0" stroke-width="1.5" fill="none"/></g>
<g transform="translate(4 124)"><circle cx="8" cy="8" r="7" fill="#2fa83a"/><path d="M8 8 L8 1 A7 7 0 0 0 1 8Z" fill="#2a6ae0"/><path d="M8 8 L8 1 A7 7 0 0 1 15 8Z" fill="#e02a2a"/><path d="M8 8 L15 8 A7 7 0 0 1 8 15Z" fill="#f2c400"/></g>
<g transform="translate(4 148)"><rect x="2" y="5" width="11" height="11" fill="#fff" stroke="#555" stroke-width="0.8"/><path d="M4 8 H11 M4 10.5 H11 M4 13 H11" stroke="#999" stroke-width="0.8"/><path d="M7 6 L13 1 L17 3 L12 8Z" fill="#e8b878" stroke="#8a5a20" stroke-width="0.6"/></g>
</svg>
<!-- triad -->
<svg class="a" style="left:205px;top:728px" width="60" height="62">
<path d="M24.3 39.5 L22.8 22" stroke="#1a6a1a" stroke-width="4"/><path d="M18 21.8 L22.3 14.6 L27 21.8 L24.5 23 H20.5Z" fill="#48b048"/>
<path d="M24.3 39.5 L42 45.5" stroke="#b81818" stroke-width="3.6"/><path d="M40 41.5 L50.5 45.8 L42 49Z" fill="#e04040"/>
<path d="M24.3 39.5 L13 51" stroke="#1010b0" stroke-width="4"/><path d="M9.5 47.5 L16.5 48.5 L16.3 53.5 L9.5 54Z" fill="#2020d0"/>
<path d="M18.5 5 L22 10 L25.5 5 M22 10 V14" stroke="#1a8a1a" stroke-width="1" fill="none"/>
<path d="M50 42.5 L55 51 M55 42.5 L50 51" stroke="#e01010" stroke-width="1.1"/>
<path d="M5 52 H9 L5 59.5 H9.5" stroke="#1010e0" stroke-width="1.1" fill="none"/>
</svg>

</body></html>
